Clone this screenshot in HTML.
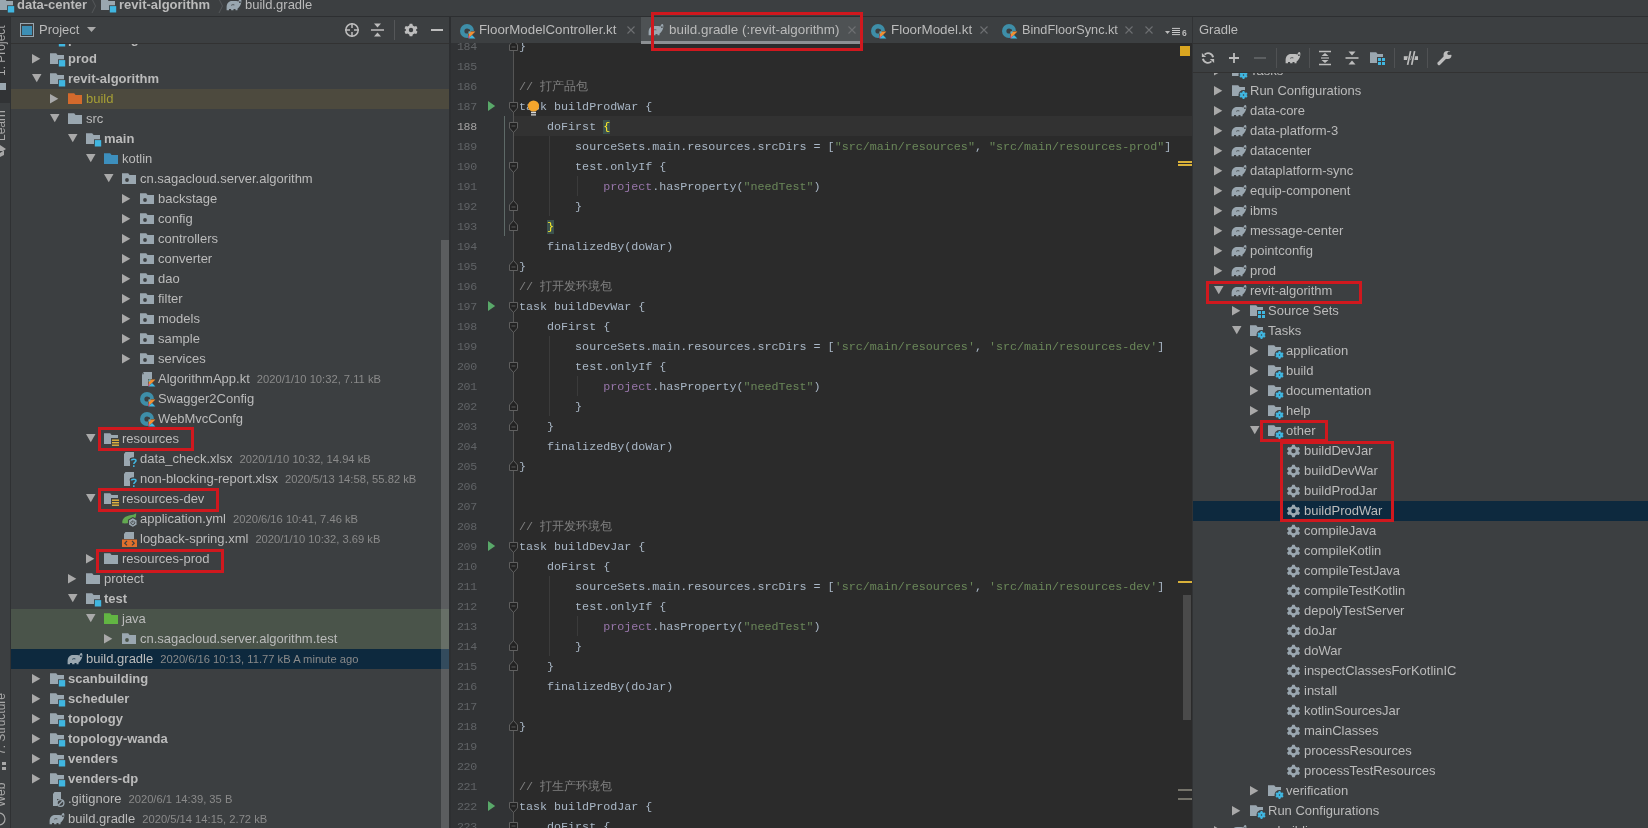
<!DOCTYPE html><html><head><meta charset="utf-8"><style>
*{margin:0;padding:0;box-sizing:border-box}
html,body{width:1648px;height:828px;overflow:hidden;background:#3c3f41;font-family:"Liberation Sans",sans-serif;font-size:13px;color:#bbbbbb}
.a{position:absolute}
.row{position:absolute;height:20px;line-height:20px;white-space:nowrap}
.b{font-weight:bold}
.meta{color:#8a8a8a;font-size:11.2px;margin-left:7px}
.code{position:absolute;left:519px;height:20px;line-height:20px;white-space:pre;font-family:"Liberation Mono",monospace;font-size:11.7px;color:#a9b7c6;padding-top:1px}
.ln{position:absolute;left:451px;width:25.8px;text-align:right;height:20px;line-height:20px;font-family:"Liberation Mono",monospace;font-size:11.6px;letter-spacing:-0.36px;color:#606366;padding-top:1px}
.pr{color:#9876aa}
.st{color:#6a8759}
.cm{color:#808080}
.mb{color:#ffef28;background:#3b514d}
.box{position:absolute;border:3px solid #d0181e}
</style></head><body><div class="a" style="left:0;top:0;width:1648px;height:828px;overflow:hidden;will-change:transform">
<div class="a" style="left:0;top:0;width:1648px;height:17px;background:#3c3f41"></div>
<svg class="a" style="left:-1px;top:-3px;overflow:visible" width="16" height="18" viewBox="0 0 16 18"><path d="M0 2.2 H6.2 L7.6 4 H14 V13 H0 Z" fill="#9aa7b0"/><rect x="8" y="8.3" width="8" height="8" fill="#3c3f41"/><rect x="8.8" y="9.1" width="6.4" height="6.4" fill="#40b6e0"/></svg>
<div class="a b" style="left:17px;top:-5px;line-height:20px">data-center</div>
<svg class="a" style="left:91px;top:0" width="6" height="16"><path d="M1 -1 L4.5 6 L1 13" stroke="#55585a" fill="none"/></svg>
<svg class="a" style="left:101px;top:-3px;overflow:visible" width="16" height="18" viewBox="0 0 16 18"><path d="M0 2.2 H6.2 L7.6 4 H14 V13 H0 Z" fill="#9aa7b0"/><rect x="8" y="8.3" width="8" height="8" fill="#3c3f41"/><rect x="8.8" y="9.1" width="6.4" height="6.4" fill="#40b6e0"/></svg>
<div class="a b" style="left:119px;top:-5px;line-height:20px">revit-algorithm</div>
<svg class="a" style="left:218px;top:0" width="6" height="16"><path d="M1 -1 L4.5 6 L1 13" stroke="#55585a" fill="none"/></svg>
<svg class="a" style="left:227px;top:-3px;overflow:visible" width="16" height="18" viewBox="0 0 16 18"><path d="M-0.4 13.2 L-0.4 10 C-0.2 6.3 1.6 3.9 5 3.9 L9.3 3.9 C10.3 3.9 10.9 4.2 11.5 4.6 C11.7 3.1 12.4 2.1 13.3 2.1 C14.3 2.1 14.6 3.4 14.3 5.2 C13.9 8 12.3 10.3 10.5 11.8 L10.5 13.2 H8.5 V11.9 H6.5 V13.2 H4.1 V11.9 H2 V13.2 Z" fill="#9aa7b0"/><ellipse cx="12.9" cy="5.2" rx="0.85" ry="0.9" fill="#3c3f41"/><path d="M4.2 8.3 Q5.8 7.2 7.4 7.9" stroke="#3c3f41" stroke-width="0.8" fill="none"/></svg>
<div class="a" style="left:245px;top:-5px;line-height:20px">build.gradle</div>
<div class="a" style="left:0;top:16px;width:11px;height:812px;background:#3c3f41;border-right:1px solid #2f3133"></div>
<div class="a" style="left:0;top:16px;width:10px;height:87px;background:#313335"></div>
<div class="a" style="left:0;top:16px;width:10px;height:812px;overflow:hidden">
<div class="a" style="left:0;top:-16px;width:40px;height:900px">
<div class="a" style="left:-6px;top:76px;width:100px;height:14px;line-height:14px;font-size:12px;color:#a8a8a8;transform-origin:0 0;transform:rotate(-90deg);white-space:nowrap">1: Project</div>
<div class="a" style="left:0;top:83px;width:6px;height:7px;background:#9aa7b0"></div>
<div class="a" style="left:-6px;top:141px;width:100px;height:14px;line-height:14px;font-size:12px;color:#a8a8a8;transform-origin:0 0;transform:rotate(-90deg);white-space:nowrap">Learn</div>
<svg class="a" style="left:-6px;top:145px" width="12" height="12"><path d="M0 4 L6 0 L12 4 L6 8 Z M2 6 V10 L6 12 L10 10 V6" fill="#a8a8a8"/></svg>
<div class="a" style="left:-6px;top:755px;width:100px;height:14px;line-height:14px;font-size:12px;color:#a8a8a8;transform-origin:0 0;transform:rotate(-90deg);white-space:nowrap">7: Structure</div>
<div class="a" style="left:2px;top:762px;width:4px;height:3px;background:#a8a8a8"></div><div class="a" style="left:2px;top:767px;width:4px;height:3px;background:#a8a8a8"></div>
<div class="a" style="left:-6px;top:807px;width:100px;height:14px;line-height:14px;font-size:12px;color:#a8a8a8;transform-origin:0 0;transform:rotate(-90deg);white-space:nowrap">Web</div>
<svg class="a" style="left:-8px;top:812px" width="14" height="14"><circle cx="7" cy="7" r="6" fill="none" stroke="#a8a8a8" stroke-width="1.2"/></svg>
</div></div>
<div class="a" style="left:11px;top:16px;width:439px;height:28px;border-bottom:1px solid #323232"></div>
<svg class="a" style="left:20px;top:23px" width="14" height="14"><rect x="0.5" y="0.5" width="13" height="13" fill="none" stroke="#9aa7b0"/><rect x="2" y="3" width="10" height="9" fill="#3d8fb5"/></svg>
<div class="a" style="left:39px;top:20px;line-height:20px">Project</div>
<svg class="a" style="left:87px;top:27px" width="10" height="6"><path d="M0 0 H9 L4.5 5 Z" fill="#a9a9a9"/></svg>
<svg class="a" style="left:344px;top:22px" width="16" height="16"><circle cx="8" cy="8" r="6.2" fill="none" stroke="#bdbdbd" stroke-width="1.5"/><path d="M8 1 V6 M8 10 V15 M1 8 H6 M10 8 H15" stroke="#bdbdbd" stroke-width="1.5"/></svg>
<svg class="a" style="left:371px;top:23px" width="14" height="14"><path d="M0 7 H13" stroke="#bdbdbd" stroke-width="1.5"/><path d="M3 0.5 H10 L6.5 4.5 Z M3 13.5 H10 L6.5 9.5 Z" fill="#bdbdbd"/></svg>
<div class="a" style="left:394px;top:20px;width:1px;height:20px;background:#555759"></div>
<svg class="a" style="left:403px;top:22px" width="16" height="16"><g transform="translate(8 8) scale(1.0)"><path d="M-1.3 -6.3 H1.3 L1.8 -4.4 L3.5 -3.5 L5.3 -4 L6.5 -1.8 L5.1 -0.4 V0.4 L6.5 1.8 L5.3 4 L3.5 3.5 L1.8 4.4 L1.3 6.3 H-1.3 L-1.8 4.4 L-3.5 3.5 L-5.3 4 L-6.5 1.8 L-5.1 0.4 V-0.4 L-6.5 -1.8 L-5.3 -4 L-3.5 -3.5 L-1.8 -4.4 Z" fill="#bdbdbd"/><circle r="2.2" fill="#3c3f41"/></g></svg>
<div class="a" style="left:431px;top:29px;width:12px;height:2px;background:#bdbdbd"></div>
<div class="a" style="left:11px;top:89px;width:438px;height:20px;background:#4d4a3e"></div>
<div class="a" style="left:11px;top:609px;width:438px;height:40px;background:#4a544a"></div>
<div class="a" style="left:11px;top:649px;width:438px;height:20px;background:#0d293e"></div>
<div class="a" style="left:11px;top:44px;width:439px;height:784px;overflow:hidden">
<div class="a" style="left:-11px;top:-44px;width:460px;height:900px">
<svg class="a" style="left:32px;top:34px" width="9" height="10"><path d="M0 0 L8.3 4.75 L0 9.5 Z" fill="#a9a9a9"/></svg>
<svg class="a" style="left:50px;top:31px;overflow:visible" width="16" height="18" viewBox="0 0 16 18"><path d="M0 2.2 H6.2 L7.6 4 H14 V13 H0 Z" fill="#9aa7b0"/><rect x="8" y="8.3" width="8" height="8" fill="#3c3f41"/><rect x="8.8" y="9.1" width="6.4" height="6.4" fill="#40b6e0"/></svg>
<div class="row" style="left:68px;top:29px"><span class="b" style="">pointconfig</span></div>
<svg class="a" style="left:32px;top:54px" width="9" height="10"><path d="M0 0 L8.3 4.75 L0 9.5 Z" fill="#a9a9a9"/></svg>
<svg class="a" style="left:50px;top:51px;overflow:visible" width="16" height="18" viewBox="0 0 16 18"><path d="M0 2.2 H6.2 L7.6 4 H14 V13 H0 Z" fill="#9aa7b0"/><rect x="8" y="8.3" width="8" height="8" fill="#3c3f41"/><rect x="8.8" y="9.1" width="6.4" height="6.4" fill="#40b6e0"/></svg>
<div class="row" style="left:68px;top:49px"><span class="b" style="">prod</span></div>
<svg class="a" style="left:32px;top:74px" width="10" height="9"><path d="M0 0 H9.5 L4.75 8.3 Z" fill="#a9a9a9"/></svg>
<svg class="a" style="left:50px;top:71px;overflow:visible" width="16" height="18" viewBox="0 0 16 18"><path d="M0 2.2 H6.2 L7.6 4 H14 V13 H0 Z" fill="#9aa7b0"/><rect x="8" y="8.3" width="8" height="8" fill="#3c3f41"/><rect x="8.8" y="9.1" width="6.4" height="6.4" fill="#40b6e0"/></svg>
<div class="row" style="left:68px;top:69px"><span class="b" style="">revit-algorithm</span></div>
<svg class="a" style="left:50px;top:94px" width="9" height="10"><path d="M0 0 L8.3 4.75 L0 9.5 Z" fill="#a9a9a9"/></svg>
<svg class="a" style="left:68px;top:91px;overflow:visible" width="16" height="18" viewBox="0 0 16 18"><path d="M0 2.2 H6.2 L7.6 4 H14 V13 H0 Z" fill="#d46a2c"/></svg>
<div class="row" style="left:86px;top:89px"><span class="" style="color:#a69f35;">build</span></div>
<svg class="a" style="left:50px;top:114px" width="10" height="9"><path d="M0 0 H9.5 L4.75 8.3 Z" fill="#a9a9a9"/></svg>
<svg class="a" style="left:68px;top:111px;overflow:visible" width="16" height="18" viewBox="0 0 16 18"><path d="M0 2.2 H6.2 L7.6 4 H14 V13 H0 Z" fill="#9aa7b0"/></svg>
<div class="row" style="left:86px;top:109px"><span class="" style="">src</span></div>
<svg class="a" style="left:68px;top:134px" width="10" height="9"><path d="M0 0 H9.5 L4.75 8.3 Z" fill="#a9a9a9"/></svg>
<svg class="a" style="left:86px;top:131px;overflow:visible" width="16" height="18" viewBox="0 0 16 18"><path d="M0 2.2 H6.2 L7.6 4 H14 V13 H0 Z" fill="#9aa7b0"/><rect x="8" y="8.3" width="8" height="8" fill="#3c3f41"/><rect x="8.8" y="9.1" width="6.4" height="6.4" fill="#40b6e0"/></svg>
<div class="row" style="left:104px;top:129px"><span class="b" style="">main</span></div>
<svg class="a" style="left:86px;top:154px" width="10" height="9"><path d="M0 0 H9.5 L4.75 8.3 Z" fill="#a9a9a9"/></svg>
<svg class="a" style="left:104px;top:151px;overflow:visible" width="16" height="18" viewBox="0 0 16 18"><path d="M0 2.2 H6.2 L7.6 4 H14 V13 H0 Z" fill="#3d8fbd"/></svg>
<div class="row" style="left:122px;top:149px"><span class="" style="">kotlin</span></div>
<svg class="a" style="left:104px;top:174px" width="10" height="9"><path d="M0 0 H9.5 L4.75 8.3 Z" fill="#a9a9a9"/></svg>
<svg class="a" style="left:122px;top:171px;overflow:visible" width="16" height="18" viewBox="0 0 16 18"><path d="M0 2.2 H6.2 L7.6 4 H14 V13 H0 Z" fill="#9aa7b0"/><circle cx="5" cy="9" r="1.9" fill="#3c3f41"/></svg>
<div class="row" style="left:140px;top:169px"><span class="" style="">cn.sagacloud.server.algorithm</span></div>
<svg class="a" style="left:122px;top:194px" width="9" height="10"><path d="M0 0 L8.3 4.75 L0 9.5 Z" fill="#a9a9a9"/></svg>
<svg class="a" style="left:140px;top:191px;overflow:visible" width="16" height="18" viewBox="0 0 16 18"><path d="M0 2.2 H6.2 L7.6 4 H14 V13 H0 Z" fill="#9aa7b0"/><circle cx="5" cy="9" r="1.9" fill="#3c3f41"/></svg>
<div class="row" style="left:158px;top:189px"><span class="" style="">backstage</span></div>
<svg class="a" style="left:122px;top:214px" width="9" height="10"><path d="M0 0 L8.3 4.75 L0 9.5 Z" fill="#a9a9a9"/></svg>
<svg class="a" style="left:140px;top:211px;overflow:visible" width="16" height="18" viewBox="0 0 16 18"><path d="M0 2.2 H6.2 L7.6 4 H14 V13 H0 Z" fill="#9aa7b0"/><circle cx="5" cy="9" r="1.9" fill="#3c3f41"/></svg>
<div class="row" style="left:158px;top:209px"><span class="" style="">config</span></div>
<svg class="a" style="left:122px;top:234px" width="9" height="10"><path d="M0 0 L8.3 4.75 L0 9.5 Z" fill="#a9a9a9"/></svg>
<svg class="a" style="left:140px;top:231px;overflow:visible" width="16" height="18" viewBox="0 0 16 18"><path d="M0 2.2 H6.2 L7.6 4 H14 V13 H0 Z" fill="#9aa7b0"/><circle cx="5" cy="9" r="1.9" fill="#3c3f41"/></svg>
<div class="row" style="left:158px;top:229px"><span class="" style="">controllers</span></div>
<svg class="a" style="left:122px;top:254px" width="9" height="10"><path d="M0 0 L8.3 4.75 L0 9.5 Z" fill="#a9a9a9"/></svg>
<svg class="a" style="left:140px;top:251px;overflow:visible" width="16" height="18" viewBox="0 0 16 18"><path d="M0 2.2 H6.2 L7.6 4 H14 V13 H0 Z" fill="#9aa7b0"/><circle cx="5" cy="9" r="1.9" fill="#3c3f41"/></svg>
<div class="row" style="left:158px;top:249px"><span class="" style="">converter</span></div>
<svg class="a" style="left:122px;top:274px" width="9" height="10"><path d="M0 0 L8.3 4.75 L0 9.5 Z" fill="#a9a9a9"/></svg>
<svg class="a" style="left:140px;top:271px;overflow:visible" width="16" height="18" viewBox="0 0 16 18"><path d="M0 2.2 H6.2 L7.6 4 H14 V13 H0 Z" fill="#9aa7b0"/><circle cx="5" cy="9" r="1.9" fill="#3c3f41"/></svg>
<div class="row" style="left:158px;top:269px"><span class="" style="">dao</span></div>
<svg class="a" style="left:122px;top:294px" width="9" height="10"><path d="M0 0 L8.3 4.75 L0 9.5 Z" fill="#a9a9a9"/></svg>
<svg class="a" style="left:140px;top:291px;overflow:visible" width="16" height="18" viewBox="0 0 16 18"><path d="M0 2.2 H6.2 L7.6 4 H14 V13 H0 Z" fill="#9aa7b0"/><circle cx="5" cy="9" r="1.9" fill="#3c3f41"/></svg>
<div class="row" style="left:158px;top:289px"><span class="" style="">filter</span></div>
<svg class="a" style="left:122px;top:314px" width="9" height="10"><path d="M0 0 L8.3 4.75 L0 9.5 Z" fill="#a9a9a9"/></svg>
<svg class="a" style="left:140px;top:311px;overflow:visible" width="16" height="18" viewBox="0 0 16 18"><path d="M0 2.2 H6.2 L7.6 4 H14 V13 H0 Z" fill="#9aa7b0"/><circle cx="5" cy="9" r="1.9" fill="#3c3f41"/></svg>
<div class="row" style="left:158px;top:309px"><span class="" style="">models</span></div>
<svg class="a" style="left:122px;top:334px" width="9" height="10"><path d="M0 0 L8.3 4.75 L0 9.5 Z" fill="#a9a9a9"/></svg>
<svg class="a" style="left:140px;top:331px;overflow:visible" width="16" height="18" viewBox="0 0 16 18"><path d="M0 2.2 H6.2 L7.6 4 H14 V13 H0 Z" fill="#9aa7b0"/><circle cx="5" cy="9" r="1.9" fill="#3c3f41"/></svg>
<div class="row" style="left:158px;top:329px"><span class="" style="">sample</span></div>
<svg class="a" style="left:122px;top:354px" width="9" height="10"><path d="M0 0 L8.3 4.75 L0 9.5 Z" fill="#a9a9a9"/></svg>
<svg class="a" style="left:140px;top:351px;overflow:visible" width="16" height="18" viewBox="0 0 16 18"><path d="M0 2.2 H6.2 L7.6 4 H14 V13 H0 Z" fill="#9aa7b0"/><circle cx="5" cy="9" r="1.9" fill="#3c3f41"/></svg>
<div class="row" style="left:158px;top:349px"><span class="" style="">services</span></div>
<svg class="a" style="left:140px;top:371px;overflow:visible" width="16" height="18" viewBox="0 0 16 18"><path d="M3.5 1 H12 V8 H8 V15 H2 V3 Z" fill="#9aa7b0"/><path d="M2 3.2 L3.6 1.2 V3.2 Z" fill="#3c3f41"/><g transform="translate(8 8)"><rect x="0" y="0" width="8" height="8" fill="#3c3f41"/><path d="M0.6 0.6 H7.4 L0.6 7.4 Z" fill="#f18e33"/><path d="M0.6 7.4 L4 4 L7.4 7.4 Z" fill="#40b6e0"/><path d="M0.6 0.6 L3.2 0.6 L0.6 3.2 Z" fill="#40b6e0"/><path d="M0.6 7.4 V4.5 L2.2 5.8 Z" fill="#c757bc"/></g></svg>
<div class="row" style="left:158px;top:369px"><span class="" style="">AlgorithmApp.kt</span><span class="meta">2020/1/10 10:32, 7.11 kB</span></div>
<svg class="a" style="left:140px;top:391px;overflow:visible" width="16" height="18" viewBox="0 0 16 18"><circle cx="7" cy="8" r="7" fill="#3e8ea8"/><circle cx="7" cy="8" r="2.6" fill="#3c3f41"/><rect x="7" y="6.5" width="3" height="3" fill="#3c3f41"/><g transform="translate(8 8)"><rect x="0" y="0" width="8" height="8" fill="#3c3f41"/><path d="M0.6 0.6 H7.4 L0.6 7.4 Z" fill="#f18e33"/><path d="M0.6 7.4 L4 4 L7.4 7.4 Z" fill="#40b6e0"/><path d="M0.6 0.6 L3.2 0.6 L0.6 3.2 Z" fill="#40b6e0"/><path d="M0.6 7.4 V4.5 L2.2 5.8 Z" fill="#c757bc"/></g></svg>
<div class="row" style="left:158px;top:389px"><span class="" style="">Swagger2Config</span></div>
<svg class="a" style="left:140px;top:411px;overflow:visible" width="16" height="18" viewBox="0 0 16 18"><circle cx="7" cy="8" r="7" fill="#3e8ea8"/><circle cx="7" cy="8" r="2.6" fill="#3c3f41"/><rect x="7" y="6.5" width="3" height="3" fill="#3c3f41"/><g transform="translate(8 8)"><rect x="0" y="0" width="8" height="8" fill="#3c3f41"/><path d="M0.6 0.6 H7.4 L0.6 7.4 Z" fill="#f18e33"/><path d="M0.6 7.4 L4 4 L7.4 7.4 Z" fill="#40b6e0"/><path d="M0.6 0.6 L3.2 0.6 L0.6 3.2 Z" fill="#40b6e0"/><path d="M0.6 7.4 V4.5 L2.2 5.8 Z" fill="#c757bc"/></g></svg>
<div class="row" style="left:158px;top:409px"><span class="" style="">WebMvcConfg</span></div>
<svg class="a" style="left:86px;top:434px" width="10" height="9"><path d="M0 0 H9.5 L4.75 8.3 Z" fill="#a9a9a9"/></svg>
<svg class="a" style="left:104px;top:431px;overflow:visible" width="16" height="18" viewBox="0 0 16 18"><path d="M0 2.2 H6.2 L7.6 4 H14 V13 H0 Z" fill="#9aa7b0"/><rect x="7" y="7" width="9" height="9" fill="#3c3f41"/><g fill="#e0b440"><rect x="8" y="8.5" width="7" height="1.4"/><rect x="8" y="11" width="7" height="1.4"/><rect x="8" y="13.5" width="7" height="1.4"/></g></svg>
<div class="row" style="left:122px;top:429px"><span class="" style="">resources</span></div>
<svg class="a" style="left:122px;top:451px;overflow:visible" width="16" height="18" viewBox="0 0 16 18"><path d="M3.5 1 H12 V7 H8 V15 H2 V3 Z" fill="#9aa7b0"/><path d="M9 9.5 C9 7.3 14.5 7.3 14.5 9.5 C14.5 11.3 12 11.3 12 13 M12 14.5 V16" stroke="#3c3f41" stroke-width="3" fill="none"/><path d="M9.5 9.5 C9.5 7.8 14 7.8 14 9.5 C14 11.2 11.8 11 11.8 13 M11.8 14.3 V16" stroke="#40b6e0" stroke-width="1.5" fill="none"/></svg>
<div class="row" style="left:140px;top:449px"><span class="" style="">data_check.xlsx</span><span class="meta">2020/1/10 10:32, 14.94 kB</span></div>
<svg class="a" style="left:122px;top:471px;overflow:visible" width="16" height="18" viewBox="0 0 16 18"><path d="M3.5 1 H12 V7 H8 V15 H2 V3 Z" fill="#9aa7b0"/><path d="M9 9.5 C9 7.3 14.5 7.3 14.5 9.5 C14.5 11.3 12 11.3 12 13 M12 14.5 V16" stroke="#3c3f41" stroke-width="3" fill="none"/><path d="M9.5 9.5 C9.5 7.8 14 7.8 14 9.5 C14 11.2 11.8 11 11.8 13 M11.8 14.3 V16" stroke="#40b6e0" stroke-width="1.5" fill="none"/></svg>
<div class="row" style="left:140px;top:469px"><span class="" style="">non-blocking-report.xlsx</span><span class="meta">2020/5/13 14:58, 55.82 kB</span></div>
<svg class="a" style="left:86px;top:494px" width="10" height="9"><path d="M0 0 H9.5 L4.75 8.3 Z" fill="#a9a9a9"/></svg>
<svg class="a" style="left:104px;top:491px;overflow:visible" width="16" height="18" viewBox="0 0 16 18"><path d="M0 2.2 H6.2 L7.6 4 H14 V13 H0 Z" fill="#9aa7b0"/><rect x="7" y="7" width="9" height="9" fill="#3c3f41"/><g fill="#e0b440"><rect x="8" y="8.5" width="7" height="1.4"/><rect x="8" y="11" width="7" height="1.4"/><rect x="8" y="13.5" width="7" height="1.4"/></g></svg>
<div class="row" style="left:122px;top:489px"><span class="" style="">resources-dev</span></div>
<svg class="a" style="left:122px;top:511px;overflow:visible" width="16" height="18" viewBox="0 0 16 18"><path d="M0.3 12.3 C0 7.5 3 5.5 7 4.6 C10 3.9 12.6 3.6 14.2 2.3 C14.4 6 13 8.6 10.5 10.8 C8.5 12.3 4 12.6 0.3 12.3 Z" fill="#62a850"/><path d="M10.8 6.6 L15.1 9.1 V14.1 L10.8 16.6 L6.5 14.1 V9.1 Z" fill="#9aa7b0" stroke="#3c3f41" stroke-width="1.1"/><path d="M9.5 10.3 A1.9 1.9 0 1 0 12.1 10.3" fill="none" stroke="#3c3f41" stroke-width="0.9"/><path d="M10.8 9.3 V11.6" stroke="#3c3f41" stroke-width="0.9"/></svg>
<div class="row" style="left:140px;top:509px"><span class="" style="">application.yml</span><span class="meta">2020/6/16 10:41, 7.46 kB</span></div>
<svg class="a" style="left:122px;top:531px;overflow:visible" width="16" height="18" viewBox="0 0 16 18"><path d="M3.5 1 H12 V8 H2 V3 Z" fill="#9aa7b0"/><rect x="0" y="8.5" width="15" height="7.5" fill="#e0702c"/><path d="M5 10 L2.8 12.2 L5 14.4 M10 10 L12.2 12.2 L10 14.4" stroke="#3c3f41" stroke-width="1.2" fill="none"/></svg>
<div class="row" style="left:140px;top:529px"><span class="" style="">logback-spring.xml</span><span class="meta">2020/1/10 10:32, 3.69 kB</span></div>
<svg class="a" style="left:86px;top:554px" width="9" height="10"><path d="M0 0 L8.3 4.75 L0 9.5 Z" fill="#a9a9a9"/></svg>
<svg class="a" style="left:104px;top:551px;overflow:visible" width="16" height="18" viewBox="0 0 16 18"><path d="M0 2.2 H6.2 L7.6 4 H14 V13 H0 Z" fill="#9aa7b0"/></svg>
<div class="row" style="left:122px;top:549px"><span class="" style="">resources-prod</span></div>
<svg class="a" style="left:68px;top:574px" width="9" height="10"><path d="M0 0 L8.3 4.75 L0 9.5 Z" fill="#a9a9a9"/></svg>
<svg class="a" style="left:86px;top:571px;overflow:visible" width="16" height="18" viewBox="0 0 16 18"><path d="M0 2.2 H6.2 L7.6 4 H14 V13 H0 Z" fill="#9aa7b0"/></svg>
<div class="row" style="left:104px;top:569px"><span class="" style="">protect</span></div>
<svg class="a" style="left:68px;top:594px" width="10" height="9"><path d="M0 0 H9.5 L4.75 8.3 Z" fill="#a9a9a9"/></svg>
<svg class="a" style="left:86px;top:591px;overflow:visible" width="16" height="18" viewBox="0 0 16 18"><path d="M0 2.2 H6.2 L7.6 4 H14 V13 H0 Z" fill="#9aa7b0"/><rect x="8" y="8.3" width="8" height="8" fill="#3c3f41"/><rect x="8.8" y="9.1" width="6.4" height="6.4" fill="#40b6e0"/></svg>
<div class="row" style="left:104px;top:589px"><span class="b" style="">test</span></div>
<svg class="a" style="left:86px;top:614px" width="10" height="9"><path d="M0 0 H9.5 L4.75 8.3 Z" fill="#a9a9a9"/></svg>
<svg class="a" style="left:104px;top:611px;overflow:visible" width="16" height="18" viewBox="0 0 16 18"><path d="M0 2.2 H6.2 L7.6 4 H14 V13 H0 Z" fill="#62b543"/></svg>
<div class="row" style="left:122px;top:609px"><span class="" style="">java</span></div>
<svg class="a" style="left:104px;top:634px" width="9" height="10"><path d="M0 0 L8.3 4.75 L0 9.5 Z" fill="#a9a9a9"/></svg>
<svg class="a" style="left:122px;top:631px;overflow:visible" width="16" height="18" viewBox="0 0 16 18"><path d="M0 2.2 H6.2 L7.6 4 H14 V13 H0 Z" fill="#9aa7b0"/><circle cx="5" cy="9" r="1.9" fill="#4a544a"/></svg>
<div class="row" style="left:140px;top:629px"><span class="" style="">cn.sagacloud.server.algorithm.test</span></div>
<svg class="a" style="left:68px;top:651px;overflow:visible" width="16" height="18" viewBox="0 0 16 18"><path d="M-0.4 13.2 L-0.4 10 C-0.2 6.3 1.6 3.9 5 3.9 L9.3 3.9 C10.3 3.9 10.9 4.2 11.5 4.6 C11.7 3.1 12.4 2.1 13.3 2.1 C14.3 2.1 14.6 3.4 14.3 5.2 C13.9 8 12.3 10.3 10.5 11.8 L10.5 13.2 H8.5 V11.9 H6.5 V13.2 H4.1 V11.9 H2 V13.2 Z" fill="#9aa7b0"/><ellipse cx="12.9" cy="5.2" rx="0.85" ry="0.9" fill="#0d293e"/><path d="M4.2 8.3 Q5.8 7.2 7.4 7.9" stroke="#0d293e" stroke-width="0.8" fill="none"/></svg>
<div class="row" style="left:86px;top:649px"><span class="" style="">build.gradle</span><span class="meta">2020/6/16 10:13, 11.77 kB A minute ago</span></div>
<svg class="a" style="left:32px;top:674px" width="9" height="10"><path d="M0 0 L8.3 4.75 L0 9.5 Z" fill="#a9a9a9"/></svg>
<svg class="a" style="left:50px;top:671px;overflow:visible" width="16" height="18" viewBox="0 0 16 18"><path d="M0 2.2 H6.2 L7.6 4 H14 V13 H0 Z" fill="#9aa7b0"/><rect x="8" y="8.3" width="8" height="8" fill="#3c3f41"/><rect x="8.8" y="9.1" width="6.4" height="6.4" fill="#40b6e0"/></svg>
<div class="row" style="left:68px;top:669px"><span class="b" style="">scanbuilding</span></div>
<svg class="a" style="left:32px;top:694px" width="9" height="10"><path d="M0 0 L8.3 4.75 L0 9.5 Z" fill="#a9a9a9"/></svg>
<svg class="a" style="left:50px;top:691px;overflow:visible" width="16" height="18" viewBox="0 0 16 18"><path d="M0 2.2 H6.2 L7.6 4 H14 V13 H0 Z" fill="#9aa7b0"/><rect x="8" y="8.3" width="8" height="8" fill="#3c3f41"/><rect x="8.8" y="9.1" width="6.4" height="6.4" fill="#40b6e0"/></svg>
<div class="row" style="left:68px;top:689px"><span class="b" style="">scheduler</span></div>
<svg class="a" style="left:32px;top:714px" width="9" height="10"><path d="M0 0 L8.3 4.75 L0 9.5 Z" fill="#a9a9a9"/></svg>
<svg class="a" style="left:50px;top:711px;overflow:visible" width="16" height="18" viewBox="0 0 16 18"><path d="M0 2.2 H6.2 L7.6 4 H14 V13 H0 Z" fill="#9aa7b0"/><rect x="8" y="8.3" width="8" height="8" fill="#3c3f41"/><rect x="8.8" y="9.1" width="6.4" height="6.4" fill="#40b6e0"/></svg>
<div class="row" style="left:68px;top:709px"><span class="b" style="">topology</span></div>
<svg class="a" style="left:32px;top:734px" width="9" height="10"><path d="M0 0 L8.3 4.75 L0 9.5 Z" fill="#a9a9a9"/></svg>
<svg class="a" style="left:50px;top:731px;overflow:visible" width="16" height="18" viewBox="0 0 16 18"><path d="M0 2.2 H6.2 L7.6 4 H14 V13 H0 Z" fill="#9aa7b0"/><rect x="8" y="8.3" width="8" height="8" fill="#3c3f41"/><rect x="8.8" y="9.1" width="6.4" height="6.4" fill="#40b6e0"/></svg>
<div class="row" style="left:68px;top:729px"><span class="b" style="">topology-wanda</span></div>
<svg class="a" style="left:32px;top:754px" width="9" height="10"><path d="M0 0 L8.3 4.75 L0 9.5 Z" fill="#a9a9a9"/></svg>
<svg class="a" style="left:50px;top:751px;overflow:visible" width="16" height="18" viewBox="0 0 16 18"><path d="M0 2.2 H6.2 L7.6 4 H14 V13 H0 Z" fill="#9aa7b0"/><rect x="8" y="8.3" width="8" height="8" fill="#3c3f41"/><rect x="8.8" y="9.1" width="6.4" height="6.4" fill="#40b6e0"/></svg>
<div class="row" style="left:68px;top:749px"><span class="b" style="">venders</span></div>
<svg class="a" style="left:32px;top:774px" width="9" height="10"><path d="M0 0 L8.3 4.75 L0 9.5 Z" fill="#a9a9a9"/></svg>
<svg class="a" style="left:50px;top:771px;overflow:visible" width="16" height="18" viewBox="0 0 16 18"><path d="M0 2.2 H6.2 L7.6 4 H14 V13 H0 Z" fill="#9aa7b0"/><rect x="8" y="8.3" width="8" height="8" fill="#3c3f41"/><rect x="8.8" y="9.1" width="6.4" height="6.4" fill="#40b6e0"/></svg>
<div class="row" style="left:68px;top:769px"><span class="b" style="">venders-dp</span></div>
<svg class="a" style="left:50px;top:791px;overflow:visible" width="16" height="18" viewBox="0 0 16 18"><path d="M4.5 1 H11 V8 H7 V15 H3 V3 Z" fill="#9aa7b0"/><circle cx="10.5" cy="12" r="3.4" fill="none" stroke="#9aa7b0" stroke-width="1.3"/><path d="M8.2 14.3 L12.8 9.7" stroke="#9aa7b0" stroke-width="1.3"/></svg>
<div class="row" style="left:68px;top:789px"><span class="" style="">.gitignore</span><span class="meta">2020/6/1 14:39, 35 B</span></div>
<svg class="a" style="left:50px;top:811px;overflow:visible" width="16" height="18" viewBox="0 0 16 18"><path d="M-0.4 13.2 L-0.4 10 C-0.2 6.3 1.6 3.9 5 3.9 L9.3 3.9 C10.3 3.9 10.9 4.2 11.5 4.6 C11.7 3.1 12.4 2.1 13.3 2.1 C14.3 2.1 14.6 3.4 14.3 5.2 C13.9 8 12.3 10.3 10.5 11.8 L10.5 13.2 H8.5 V11.9 H6.5 V13.2 H4.1 V11.9 H2 V13.2 Z" fill="#9aa7b0"/><ellipse cx="12.9" cy="5.2" rx="0.85" ry="0.9" fill="#3c3f41"/><path d="M4.2 8.3 Q5.8 7.2 7.4 7.9" stroke="#3c3f41" stroke-width="0.8" fill="none"/></svg>
<div class="row" style="left:68px;top:809px"><span class="" style="">build.gradle</span><span class="meta">2020/5/14 14:15, 2.72 kB</span></div>
</div></div>
<div class="a" style="left:441px;top:240px;width:8px;height:588px;background:rgba(255,255,255,0.16)"></div>
<div class="a" style="left:449px;top:16px;width:2px;height:812px;background:#2d2f31"></div>
<div class="box" style="left:98px;top:427px;width:96px;height:24px"></div>
<div class="box" style="left:98px;top:488px;width:121px;height:24px"></div>
<div class="box" style="left:96px;top:549px;width:128px;height:24px"></div>
<div class="a" style="left:451px;top:16px;width:741px;height:27px;background:#3c3f41"></div>
<div class="a" style="left:451px;top:43px;width:741px;height:785px;background:#2b2b2b"></div>
<div class="a" style="left:451px;top:43px;width:63px;height:785px;background:#313335"></div>
<div class="a" style="left:641px;top:17px;width:219px;height:27px;background:#4e5254"></div>
<div class="a" style="left:641px;top:41px;width:219px;height:3px;background:#8d9093"></div>
<svg class="a" style="left:460px;top:23px;overflow:visible" width="16" height="18" viewBox="0 0 16 18"><circle cx="7" cy="8" r="7" fill="#3e8ea8"/><circle cx="7" cy="8" r="2.6" fill="#3c3f41"/><rect x="7" y="6.5" width="3" height="3" fill="#3c3f41"/><g transform="translate(8 8)"><rect x="0" y="0" width="8" height="8" fill="#3c3f41"/><path d="M0.6 0.6 H7.4 L0.6 7.4 Z" fill="#f18e33"/><path d="M0.6 7.4 L4 4 L7.4 7.4 Z" fill="#40b6e0"/><path d="M0.6 0.6 L3.2 0.6 L0.6 3.2 Z" fill="#40b6e0"/><path d="M0.6 7.4 V4.5 L2.2 5.8 Z" fill="#c757bc"/></g></svg>
<div class="a" style="left:479px;top:20px;line-height:20px;font-size:13.3px">FloorModelController.kt</div>
<svg class="a" style="left:627px;top:26px" width="8" height="8"><path d="M0.5 0.5 L7.5 7.5 M7.5 0.5 L0.5 7.5" stroke="#6e7072" stroke-width="1.1"/></svg>
<svg class="a" style="left:649px;top:22px;overflow:visible" width="16" height="18" viewBox="0 0 16 18"><path d="M-0.4 13.2 L-0.4 10 C-0.2 6.3 1.6 3.9 5 3.9 L9.3 3.9 C10.3 3.9 10.9 4.2 11.5 4.6 C11.7 3.1 12.4 2.1 13.3 2.1 C14.3 2.1 14.6 3.4 14.3 5.2 C13.9 8 12.3 10.3 10.5 11.8 L10.5 13.2 H8.5 V11.9 H6.5 V13.2 H4.1 V11.9 H2 V13.2 Z" fill="#9aa7b0"/><ellipse cx="12.9" cy="5.2" rx="0.85" ry="0.9" fill="#4e5254"/><path d="M4.2 8.3 Q5.8 7.2 7.4 7.9" stroke="#4e5254" stroke-width="0.8" fill="none"/></svg>
<div class="a" style="left:669px;top:20px;line-height:20px;font-size:13.4px">build.gradle (:revit-algorithm)</div>
<svg class="a" style="left:848px;top:26px" width="8" height="8"><path d="M0.5 0.5 L7.5 7.5 M7.5 0.5 L0.5 7.5" stroke="#6e7072" stroke-width="1.1"/></svg>
<svg class="a" style="left:871px;top:23px;overflow:visible" width="16" height="18" viewBox="0 0 16 18"><circle cx="7" cy="8" r="7" fill="#3e8ea8"/><circle cx="7" cy="8" r="2.6" fill="#3c3f41"/><rect x="7" y="6.5" width="3" height="3" fill="#3c3f41"/><g transform="translate(8 8)"><rect x="0" y="0" width="8" height="8" fill="#3c3f41"/><path d="M0.6 0.6 H7.4 L0.6 7.4 Z" fill="#f18e33"/><path d="M0.6 7.4 L4 4 L7.4 7.4 Z" fill="#40b6e0"/><path d="M0.6 0.6 L3.2 0.6 L0.6 3.2 Z" fill="#40b6e0"/><path d="M0.6 7.4 V4.5 L2.2 5.8 Z" fill="#c757bc"/></g></svg>
<div class="a" style="left:891px;top:20px;line-height:20px;font-size:13.4px">FloorModel.kt</div>
<svg class="a" style="left:980px;top:26px" width="8" height="8"><path d="M0.5 0.5 L7.5 7.5 M7.5 0.5 L0.5 7.5" stroke="#6e7072" stroke-width="1.1"/></svg>
<svg class="a" style="left:1002px;top:23px;overflow:visible" width="16" height="18" viewBox="0 0 16 18"><circle cx="7" cy="8" r="7" fill="#3e8ea8"/><circle cx="7" cy="8" r="2.6" fill="#3c3f41"/><rect x="7" y="6.5" width="3" height="3" fill="#3c3f41"/><g transform="translate(8 8)"><rect x="0" y="0" width="8" height="8" fill="#3c3f41"/><path d="M0.6 0.6 H7.4 L0.6 7.4 Z" fill="#f18e33"/><path d="M0.6 7.4 L4 4 L7.4 7.4 Z" fill="#40b6e0"/><path d="M0.6 0.6 L3.2 0.6 L0.6 3.2 Z" fill="#40b6e0"/><path d="M0.6 7.4 V4.5 L2.2 5.8 Z" fill="#c757bc"/></g></svg>
<div class="a" style="left:1022px;top:20px;line-height:20px;font-size:12.7px">BindFloorSync.kt</div>
<svg class="a" style="left:1125px;top:26px" width="8" height="8"><path d="M0.5 0.5 L7.5 7.5 M7.5 0.5 L0.5 7.5" stroke="#6e7072" stroke-width="1.1"/></svg>
<svg class="a" style="left:1145px;top:26px" width="8" height="8"><path d="M0.5 0.5 L7.5 7.5 M7.5 0.5 L0.5 7.5" stroke="#6e7072" stroke-width="1.1"/></svg>
<svg class="a" style="left:1165px;top:25px" width="24" height="12"><path d="M0 6 H5 L2.5 9 Z" fill="#bbbbbb"/><path d="M7 3.4 H15 M7 5.5 H15 M7 7.5 H15 M7 9.6 H15" stroke="#c8c8c8" stroke-width="1"/><text x="17" y="10.5" font-family="Liberation Sans" font-size="8.5" font-weight="bold" fill="#bbbbbb">6</text></svg>
<div class="a" style="left:451px;top:43px;width:741px;height:785px;overflow:hidden"><div class="a" style="left:-451px;top:-43px;width:1648px;height:900px">
<div class="a" style="left:514px;top:116px;width:678px;height:20px;background:#323232"></div>
<div class="a" style="left:549px;top:136px;width:1px;height:80px;background:#3b3b3b"></div>
<div class="a" style="left:577px;top:176px;width:1px;height:20px;background:#3b3b3b"></div>
<div class="a" style="left:549px;top:336px;width:1px;height:80px;background:#3b3b3b"></div>
<div class="a" style="left:577px;top:376px;width:1px;height:20px;background:#3b3b3b"></div>
<div class="a" style="left:549px;top:576px;width:1px;height:80px;background:#3b3b3b"></div>
<div class="a" style="left:577px;top:616px;width:1px;height:20px;background:#3b3b3b"></div>
<div class="a" style="left:549px;top:836px;width:1px;height:20px;background:#3b3b3b"></div>
<div class="ln" style="top:36px;">184</div>
<div class="code" style="top:36px">}</div>
<div class="ln" style="top:56px;">185</div>
<div class="code" style="top:56px"></div>
<div class="ln" style="top:76px;">186</div>
<div class="code" style="top:76px"><span class="cm">// 打产品包</span></div>
<div class="ln" style="top:96px;">187</div>
<div class="code" style="top:96px">task buildProdWar {</div>
<div class="ln" style="top:116px;color:#a4a3a3;">188</div>
<div class="code" style="top:116px">    doFirst <span class="mb">{</span></div>
<div class="ln" style="top:136px;">189</div>
<div class="code" style="top:136px">        sourceSets.main.resources.srcDirs = [<span class="st">"src/main/resources"</span>, <span class="st">"src/main/resources-prod"</span>]</div>
<div class="ln" style="top:156px;">190</div>
<div class="code" style="top:156px">        test.onlyIf {</div>
<div class="ln" style="top:176px;">191</div>
<div class="code" style="top:176px">            <span class="pr">project</span>.hasProperty(<span class="st">"needTest"</span>)</div>
<div class="ln" style="top:196px;">192</div>
<div class="code" style="top:196px">        }</div>
<div class="ln" style="top:216px;">193</div>
<div class="code" style="top:216px">    <span class="mb">}</span></div>
<div class="ln" style="top:236px;">194</div>
<div class="code" style="top:236px">    finalizedBy(doWar)</div>
<div class="ln" style="top:256px;">195</div>
<div class="code" style="top:256px">}</div>
<div class="ln" style="top:276px;">196</div>
<div class="code" style="top:276px"><span class="cm">// 打开发环境包</span></div>
<div class="ln" style="top:296px;">197</div>
<div class="code" style="top:296px">task buildDevWar {</div>
<div class="ln" style="top:316px;">198</div>
<div class="code" style="top:316px">    doFirst {</div>
<div class="ln" style="top:336px;">199</div>
<div class="code" style="top:336px">        sourceSets.main.resources.srcDirs = [<span class="st">'src/main/resources'</span>, <span class="st">'src/main/resources-dev'</span>]</div>
<div class="ln" style="top:356px;">200</div>
<div class="code" style="top:356px">        test.onlyIf {</div>
<div class="ln" style="top:376px;">201</div>
<div class="code" style="top:376px">            <span class="pr">project</span>.hasProperty(<span class="st">"needTest"</span>)</div>
<div class="ln" style="top:396px;">202</div>
<div class="code" style="top:396px">        }</div>
<div class="ln" style="top:416px;">203</div>
<div class="code" style="top:416px">    }</div>
<div class="ln" style="top:436px;">204</div>
<div class="code" style="top:436px">    finalizedBy(doWar)</div>
<div class="ln" style="top:456px;">205</div>
<div class="code" style="top:456px">}</div>
<div class="ln" style="top:476px;">206</div>
<div class="code" style="top:476px"></div>
<div class="ln" style="top:496px;">207</div>
<div class="code" style="top:496px"></div>
<div class="ln" style="top:516px;">208</div>
<div class="code" style="top:516px"><span class="cm">// 打开发环境包</span></div>
<div class="ln" style="top:536px;">209</div>
<div class="code" style="top:536px">task buildDevJar {</div>
<div class="ln" style="top:556px;">210</div>
<div class="code" style="top:556px">    doFirst {</div>
<div class="ln" style="top:576px;">211</div>
<div class="code" style="top:576px">        sourceSets.main.resources.srcDirs = [<span class="st">'src/main/resources'</span>, <span class="st">'src/main/resources-dev'</span>]</div>
<div class="ln" style="top:596px;">212</div>
<div class="code" style="top:596px">        test.onlyIf {</div>
<div class="ln" style="top:616px;">213</div>
<div class="code" style="top:616px">            <span class="pr">project</span>.hasProperty(<span class="st">"needTest"</span>)</div>
<div class="ln" style="top:636px;">214</div>
<div class="code" style="top:636px">        }</div>
<div class="ln" style="top:656px;">215</div>
<div class="code" style="top:656px">    }</div>
<div class="ln" style="top:676px;">216</div>
<div class="code" style="top:676px">    finalizedBy(doJar)</div>
<div class="ln" style="top:696px;">217</div>
<div class="code" style="top:696px"></div>
<div class="ln" style="top:716px;">218</div>
<div class="code" style="top:716px">}</div>
<div class="ln" style="top:736px;">219</div>
<div class="code" style="top:736px"></div>
<div class="ln" style="top:756px;">220</div>
<div class="code" style="top:756px"></div>
<div class="ln" style="top:776px;">221</div>
<div class="code" style="top:776px"><span class="cm">// 打生产环境包</span></div>
<div class="ln" style="top:796px;">222</div>
<div class="code" style="top:796px">task buildProdJar {</div>
<div class="ln" style="top:816px;">223</div>
<div class="code" style="top:816px">    doFirst {</div>
<svg class="a" style="left:488px;top:101px" width="8" height="11"><path d="M0 0 L7.2 5 L0 10 Z" fill="#59a869"/></svg>
<svg class="a" style="left:488px;top:301px" width="8" height="11"><path d="M0 0 L7.2 5 L0 10 Z" fill="#59a869"/></svg>
<svg class="a" style="left:488px;top:541px" width="8" height="11"><path d="M0 0 L7.2 5 L0 10 Z" fill="#59a869"/></svg>
<svg class="a" style="left:488px;top:801px" width="8" height="11"><path d="M0 0 L7.2 5 L0 10 Z" fill="#59a869"/></svg>
<div class="a" style="left:513px;top:43px;width:1px;height:785px;background:#555555"></div>
<div class="a" style="left:504px;top:116px;width:1px;height:120px;background:#5e6a68"></div>
<svg class="a" style="left:509px;top:102px" width="10" height="12"><path d="M0.5 0.5 H8.5 V6 L4.5 10.5 L0.5 6 Z" fill="#232323" stroke="#606060"/><path d="M2.5 4 H6.5" stroke="#5a5a5a"/></svg>
<svg class="a" style="left:509px;top:122px" width="10" height="12"><path d="M0.5 0.5 H8.5 V6 L4.5 10.5 L0.5 6 Z" fill="#232323" stroke="#606060"/><path d="M2.5 4 H6.5" stroke="#5a5a5a"/></svg>
<svg class="a" style="left:509px;top:162px" width="10" height="12"><path d="M0.5 0.5 H8.5 V6 L4.5 10.5 L0.5 6 Z" fill="#232323" stroke="#606060"/><path d="M2.5 4 H6.5" stroke="#5a5a5a"/></svg>
<svg class="a" style="left:509px;top:302px" width="10" height="12"><path d="M0.5 0.5 H8.5 V6 L4.5 10.5 L0.5 6 Z" fill="#232323" stroke="#606060"/><path d="M2.5 4 H6.5" stroke="#5a5a5a"/></svg>
<svg class="a" style="left:509px;top:322px" width="10" height="12"><path d="M0.5 0.5 H8.5 V6 L4.5 10.5 L0.5 6 Z" fill="#232323" stroke="#606060"/><path d="M2.5 4 H6.5" stroke="#5a5a5a"/></svg>
<svg class="a" style="left:509px;top:362px" width="10" height="12"><path d="M0.5 0.5 H8.5 V6 L4.5 10.5 L0.5 6 Z" fill="#232323" stroke="#606060"/><path d="M2.5 4 H6.5" stroke="#5a5a5a"/></svg>
<svg class="a" style="left:509px;top:542px" width="10" height="12"><path d="M0.5 0.5 H8.5 V6 L4.5 10.5 L0.5 6 Z" fill="#232323" stroke="#606060"/><path d="M2.5 4 H6.5" stroke="#5a5a5a"/></svg>
<svg class="a" style="left:509px;top:562px" width="10" height="12"><path d="M0.5 0.5 H8.5 V6 L4.5 10.5 L0.5 6 Z" fill="#232323" stroke="#606060"/><path d="M2.5 4 H6.5" stroke="#5a5a5a"/></svg>
<svg class="a" style="left:509px;top:602px" width="10" height="12"><path d="M0.5 0.5 H8.5 V6 L4.5 10.5 L0.5 6 Z" fill="#232323" stroke="#606060"/><path d="M2.5 4 H6.5" stroke="#5a5a5a"/></svg>
<svg class="a" style="left:509px;top:802px" width="10" height="12"><path d="M0.5 0.5 H8.5 V6 L4.5 10.5 L0.5 6 Z" fill="#232323" stroke="#606060"/><path d="M2.5 4 H6.5" stroke="#5a5a5a"/></svg>
<svg class="a" style="left:509px;top:822px" width="10" height="12"><path d="M0.5 0.5 H8.5 V6 L4.5 10.5 L0.5 6 Z" fill="#232323" stroke="#606060"/><path d="M2.5 4 H6.5" stroke="#5a5a5a"/></svg>
<svg class="a" style="left:509px;top:40px" width="10" height="12"><path d="M0.5 10.5 H8.5 V5 L4.5 0.5 L0.5 5 Z" fill="#232323" stroke="#606060"/><path d="M2.5 7 H6.5" stroke="#5a5a5a"/></svg>
<svg class="a" style="left:509px;top:200px" width="10" height="12"><path d="M0.5 10.5 H8.5 V5 L4.5 0.5 L0.5 5 Z" fill="#232323" stroke="#606060"/><path d="M2.5 7 H6.5" stroke="#5a5a5a"/></svg>
<svg class="a" style="left:509px;top:220px" width="10" height="12"><path d="M0.5 10.5 H8.5 V5 L4.5 0.5 L0.5 5 Z" fill="#232323" stroke="#606060"/><path d="M2.5 7 H6.5" stroke="#5a5a5a"/></svg>
<svg class="a" style="left:509px;top:260px" width="10" height="12"><path d="M0.5 10.5 H8.5 V5 L4.5 0.5 L0.5 5 Z" fill="#232323" stroke="#606060"/><path d="M2.5 7 H6.5" stroke="#5a5a5a"/></svg>
<svg class="a" style="left:509px;top:400px" width="10" height="12"><path d="M0.5 10.5 H8.5 V5 L4.5 0.5 L0.5 5 Z" fill="#232323" stroke="#606060"/><path d="M2.5 7 H6.5" stroke="#5a5a5a"/></svg>
<svg class="a" style="left:509px;top:420px" width="10" height="12"><path d="M0.5 10.5 H8.5 V5 L4.5 0.5 L0.5 5 Z" fill="#232323" stroke="#606060"/><path d="M2.5 7 H6.5" stroke="#5a5a5a"/></svg>
<svg class="a" style="left:509px;top:460px" width="10" height="12"><path d="M0.5 10.5 H8.5 V5 L4.5 0.5 L0.5 5 Z" fill="#232323" stroke="#606060"/><path d="M2.5 7 H6.5" stroke="#5a5a5a"/></svg>
<svg class="a" style="left:509px;top:640px" width="10" height="12"><path d="M0.5 10.5 H8.5 V5 L4.5 0.5 L0.5 5 Z" fill="#232323" stroke="#606060"/><path d="M2.5 7 H6.5" stroke="#5a5a5a"/></svg>
<svg class="a" style="left:509px;top:660px" width="10" height="12"><path d="M0.5 10.5 H8.5 V5 L4.5 0.5 L0.5 5 Z" fill="#232323" stroke="#606060"/><path d="M2.5 7 H6.5" stroke="#5a5a5a"/></svg>
<svg class="a" style="left:509px;top:720px" width="10" height="12"><path d="M0.5 10.5 H8.5 V5 L4.5 0.5 L0.5 5 Z" fill="#232323" stroke="#606060"/><path d="M2.5 7 H6.5" stroke="#5a5a5a"/></svg>
<svg class="a" style="left:527px;top:100px" width="14" height="17"><circle cx="6.5" cy="6" r="5.6" fill="#f4a52c"/><path d="M4 12.5 H9 M4 14.8 H9" stroke="#d9d9d9" stroke-width="1.3"/></svg>
</div></div>
<div class="a" style="left:1180px;top:46px;width:10px;height:10px;background:#d9a520"></div>
<div class="a" style="left:1178px;top:161px;width:14px;height:2px;background:#d9b13a"></div>
<div class="a" style="left:1178px;top:164px;width:14px;height:2px;background:#d9b13a"></div>
<div class="a" style="left:1178px;top:581px;width:14px;height:2px;background:#d9b13a"></div>
<div class="a" style="left:1178px;top:789px;width:14px;height:2px;background:#75736a"></div>
<div class="a" style="left:1178px;top:798px;width:14px;height:2px;background:#75736a"></div>
<div class="a" style="left:1183px;top:595px;width:8px;height:125px;background:#4a4a4a"></div>
<div class="a" style="left:1192px;top:16px;width:456px;height:812px;background:#3c3f41;border-left:1px solid #313335"></div>
<div class="a" style="left:1193px;top:43px;width:455px;height:1px;background:#323232"></div>
<div class="a" style="left:1199px;top:20px;line-height:20px">Gradle</div>
<div class="a" style="left:1193px;top:72px;width:455px;height:1px;background:#323232"></div>
<svg class="a" style="left:1200px;top:50px" width="16" height="16"><path d="M4.6 4.6 A5.1 5.1 0 0 1 13.1 7.2" stroke="#bdbdbd" stroke-width="1.9" fill="none"/><path d="M1.9 2.9 V7.1 H6.1 Z" fill="#bdbdbd"/><path d="M2.9 8.8 A5.1 5.1 0 0 0 11.4 11.4" stroke="#bdbdbd" stroke-width="1.9" fill="none"/><path d="M14.1 13.1 V8.9 H9.9 Z" fill="#bdbdbd"/></svg>
<svg class="a" style="left:1227px;top:51px" width="14" height="14"><path d="M7 2 V12 M2 7 H12" stroke="#bdbdbd" stroke-width="1.8"/></svg>
<svg class="a" style="left:1253px;top:51px" width="14" height="14"><path d="M1 7 H13" stroke="#5c5f61" stroke-width="2"/></svg>
<div class="a" style="left:1276px;top:48px;width:1px;height:20px;background:#505254"></div>
<svg class="a" style="left:1286px;top:50px;overflow:visible" width="16" height="18" viewBox="0 0 16 18"><path d="M-0.4 13.2 L-0.4 10 C-0.2 6.3 1.6 3.9 5 3.9 L9.3 3.9 C10.3 3.9 10.9 4.2 11.5 4.6 C11.7 3.1 12.4 2.1 13.3 2.1 C14.3 2.1 14.6 3.4 14.3 5.2 C13.9 8 12.3 10.3 10.5 11.8 L10.5 13.2 H8.5 V11.9 H6.5 V13.2 H4.1 V11.9 H2 V13.2 Z" fill="#bdbdbd"/><ellipse cx="12.9" cy="5.2" rx="0.85" ry="0.9" fill="#3c3f41"/><path d="M4.2 8.3 Q5.8 7.2 7.4 7.9" stroke="#3c3f41" stroke-width="0.8" fill="none"/></svg>
<div class="a" style="left:1309px;top:48px;width:1px;height:20px;background:#505254"></div>
<svg class="a" style="left:1317px;top:50px" width="16" height="16"><path d="M2 1.5 H14 M2 14.5 H14" stroke="#bdbdbd" stroke-width="1.6"/><path d="M4.5 6 L8 3 L11.5 6 Z M4.5 10 L8 13 L11.5 10 Z" fill="#bdbdbd"/><path d="M4 8 H12" stroke="#bdbdbd" stroke-width="1.2"/></svg>
<svg class="a" style="left:1344px;top:50px" width="16" height="16"><path d="M1.5 8 H14.5" stroke="#bdbdbd" stroke-width="1.6"/><path d="M4.5 1.5 H11.5 L8 5.5 Z M4.5 14.5 H11.5 L8 10.5 Z" fill="#bdbdbd"/></svg>
<svg class="a" style="left:1370px;top:50px;overflow:visible" width="16" height="18" viewBox="0 0 16 18"><path d="M0 2.2 H6.2 L7.6 4 H13 V13 H0 Z" fill="#9aa7b0"/><rect x="7" y="7" width="9" height="9" fill="#3c3f41"/><g fill="#40b6e0"><rect x="8" y="8" width="3" height="3"/><rect x="12" y="8" width="3" height="3"/><rect x="8" y="12" width="3" height="3"/><rect x="12" y="12" width="3" height="3"/></g></svg>
<div class="a" style="left:1394px;top:48px;width:1px;height:20px;background:#505254"></div>
<svg class="a" style="left:1402px;top:50px" width="18" height="16"><rect x="1.8" y="6.2" width="14.2" height="3.8" fill="#bdbdbd"/><path d="M8.6 1.1 L5.6 14.9 M12.6 1.1 L9.7 14.9" stroke="#3c3f41" stroke-width="3.2"/><path d="M8.6 1.1 L5.6 14.9 M12.6 1.1 L9.7 14.9" stroke="#bdbdbd" stroke-width="1.7"/></svg>
<div class="a" style="left:1427px;top:48px;width:1px;height:20px;background:#505254"></div>
<svg class="a" style="left:1436px;top:50px" width="17" height="16"><path d="M3 13.5 L9.5 7" stroke="#bdbdbd" stroke-width="3.2" stroke-linecap="round"/><circle cx="11.5" cy="5" r="4" fill="#bdbdbd"/><path d="M11.5 4.5 L15.5 0.5 L17 5 Z" fill="#3c3f41"/><circle cx="13" cy="3.2" r="1.6" fill="#3c3f41"/></svg>
<div class="a" style="left:1193px;top:501px;width:455px;height:20px;background:#0d293e"></div>
<div class="a" style="left:1193px;top:73px;width:455px;height:755px;overflow:hidden">
<div class="a" style="left:-1193px;top:-73px;width:1648px;height:900px">
<svg class="a" style="left:1214px;top:66px" width="9" height="10"><path d="M0 0 L8.3 4.75 L0 9.5 Z" fill="#a9a9a9"/></svg>
<svg class="a" style="left:1232px;top:63px;overflow:visible" width="16" height="18" viewBox="0 0 16 18"><path d="M0 2.2 H6.2 L7.6 4 H13 V13 H0 Z" fill="#9aa7b0"/><circle cx="11.5" cy="12" r="5" fill="#3c3f41"/><g transform="translate(11.5 12) scale(0.62)"><path d="M-1.3 -6.3 H1.3 L1.8 -4.4 L3.5 -3.5 L5.3 -4 L6.5 -1.8 L5.1 -0.4 V0.4 L6.5 1.8 L5.3 4 L3.5 3.5 L1.8 4.4 L1.3 6.3 H-1.3 L-1.8 4.4 L-3.5 3.5 L-5.3 4 L-6.5 1.8 L-5.1 0.4 V-0.4 L-6.5 -1.8 L-5.3 -4 L-3.5 -3.5 L-1.8 -4.4 Z" fill="#40b6e0"/><circle r="1.2" fill="#3c3f41"/></g></svg>
<div class="row" style="left:1250px;top:61px"><span class="" style="">Tasks</span></div>
<svg class="a" style="left:1214px;top:86px" width="9" height="10"><path d="M0 0 L8.3 4.75 L0 9.5 Z" fill="#a9a9a9"/></svg>
<svg class="a" style="left:1232px;top:83px;overflow:visible" width="16" height="18" viewBox="0 0 16 18"><path d="M0 2.2 H6.2 L7.6 4 H13 V13 H0 Z" fill="#9aa7b0"/><circle cx="11.5" cy="12" r="5" fill="#3c3f41"/><g transform="translate(11.5 12) scale(0.62)"><path d="M-1.3 -6.3 H1.3 L1.8 -4.4 L3.5 -3.5 L5.3 -4 L6.5 -1.8 L5.1 -0.4 V0.4 L6.5 1.8 L5.3 4 L3.5 3.5 L1.8 4.4 L1.3 6.3 H-1.3 L-1.8 4.4 L-3.5 3.5 L-5.3 4 L-6.5 1.8 L-5.1 0.4 V-0.4 L-6.5 -1.8 L-5.3 -4 L-3.5 -3.5 L-1.8 -4.4 Z" fill="#40b6e0"/><circle r="1.2" fill="#3c3f41"/></g></svg>
<div class="row" style="left:1250px;top:81px"><span class="" style="">Run Configurations</span></div>
<svg class="a" style="left:1214px;top:106px" width="9" height="10"><path d="M0 0 L8.3 4.75 L0 9.5 Z" fill="#a9a9a9"/></svg>
<svg class="a" style="left:1232px;top:103px;overflow:visible" width="16" height="18" viewBox="0 0 16 18"><path d="M-0.4 13.2 L-0.4 10 C-0.2 6.3 1.6 3.9 5 3.9 L9.3 3.9 C10.3 3.9 10.9 4.2 11.5 4.6 C11.7 3.1 12.4 2.1 13.3 2.1 C14.3 2.1 14.6 3.4 14.3 5.2 C13.9 8 12.3 10.3 10.5 11.8 L10.5 13.2 H8.5 V11.9 H6.5 V13.2 H4.1 V11.9 H2 V13.2 Z" fill="#9aa7b0"/><ellipse cx="12.9" cy="5.2" rx="0.85" ry="0.9" fill="#3c3f41"/><path d="M4.2 8.3 Q5.8 7.2 7.4 7.9" stroke="#3c3f41" stroke-width="0.8" fill="none"/></svg>
<div class="row" style="left:1250px;top:101px"><span class="" style="">data-core</span></div>
<svg class="a" style="left:1214px;top:126px" width="9" height="10"><path d="M0 0 L8.3 4.75 L0 9.5 Z" fill="#a9a9a9"/></svg>
<svg class="a" style="left:1232px;top:123px;overflow:visible" width="16" height="18" viewBox="0 0 16 18"><path d="M-0.4 13.2 L-0.4 10 C-0.2 6.3 1.6 3.9 5 3.9 L9.3 3.9 C10.3 3.9 10.9 4.2 11.5 4.6 C11.7 3.1 12.4 2.1 13.3 2.1 C14.3 2.1 14.6 3.4 14.3 5.2 C13.9 8 12.3 10.3 10.5 11.8 L10.5 13.2 H8.5 V11.9 H6.5 V13.2 H4.1 V11.9 H2 V13.2 Z" fill="#9aa7b0"/><ellipse cx="12.9" cy="5.2" rx="0.85" ry="0.9" fill="#3c3f41"/><path d="M4.2 8.3 Q5.8 7.2 7.4 7.9" stroke="#3c3f41" stroke-width="0.8" fill="none"/></svg>
<div class="row" style="left:1250px;top:121px"><span class="" style="">data-platform-3</span></div>
<svg class="a" style="left:1214px;top:146px" width="9" height="10"><path d="M0 0 L8.3 4.75 L0 9.5 Z" fill="#a9a9a9"/></svg>
<svg class="a" style="left:1232px;top:143px;overflow:visible" width="16" height="18" viewBox="0 0 16 18"><path d="M-0.4 13.2 L-0.4 10 C-0.2 6.3 1.6 3.9 5 3.9 L9.3 3.9 C10.3 3.9 10.9 4.2 11.5 4.6 C11.7 3.1 12.4 2.1 13.3 2.1 C14.3 2.1 14.6 3.4 14.3 5.2 C13.9 8 12.3 10.3 10.5 11.8 L10.5 13.2 H8.5 V11.9 H6.5 V13.2 H4.1 V11.9 H2 V13.2 Z" fill="#9aa7b0"/><ellipse cx="12.9" cy="5.2" rx="0.85" ry="0.9" fill="#3c3f41"/><path d="M4.2 8.3 Q5.8 7.2 7.4 7.9" stroke="#3c3f41" stroke-width="0.8" fill="none"/></svg>
<div class="row" style="left:1250px;top:141px"><span class="" style="">datacenter</span></div>
<svg class="a" style="left:1214px;top:166px" width="9" height="10"><path d="M0 0 L8.3 4.75 L0 9.5 Z" fill="#a9a9a9"/></svg>
<svg class="a" style="left:1232px;top:163px;overflow:visible" width="16" height="18" viewBox="0 0 16 18"><path d="M-0.4 13.2 L-0.4 10 C-0.2 6.3 1.6 3.9 5 3.9 L9.3 3.9 C10.3 3.9 10.9 4.2 11.5 4.6 C11.7 3.1 12.4 2.1 13.3 2.1 C14.3 2.1 14.6 3.4 14.3 5.2 C13.9 8 12.3 10.3 10.5 11.8 L10.5 13.2 H8.5 V11.9 H6.5 V13.2 H4.1 V11.9 H2 V13.2 Z" fill="#9aa7b0"/><ellipse cx="12.9" cy="5.2" rx="0.85" ry="0.9" fill="#3c3f41"/><path d="M4.2 8.3 Q5.8 7.2 7.4 7.9" stroke="#3c3f41" stroke-width="0.8" fill="none"/></svg>
<div class="row" style="left:1250px;top:161px"><span class="" style="">dataplatform-sync</span></div>
<svg class="a" style="left:1214px;top:186px" width="9" height="10"><path d="M0 0 L8.3 4.75 L0 9.5 Z" fill="#a9a9a9"/></svg>
<svg class="a" style="left:1232px;top:183px;overflow:visible" width="16" height="18" viewBox="0 0 16 18"><path d="M-0.4 13.2 L-0.4 10 C-0.2 6.3 1.6 3.9 5 3.9 L9.3 3.9 C10.3 3.9 10.9 4.2 11.5 4.6 C11.7 3.1 12.4 2.1 13.3 2.1 C14.3 2.1 14.6 3.4 14.3 5.2 C13.9 8 12.3 10.3 10.5 11.8 L10.5 13.2 H8.5 V11.9 H6.5 V13.2 H4.1 V11.9 H2 V13.2 Z" fill="#9aa7b0"/><ellipse cx="12.9" cy="5.2" rx="0.85" ry="0.9" fill="#3c3f41"/><path d="M4.2 8.3 Q5.8 7.2 7.4 7.9" stroke="#3c3f41" stroke-width="0.8" fill="none"/></svg>
<div class="row" style="left:1250px;top:181px"><span class="" style="">equip-component</span></div>
<svg class="a" style="left:1214px;top:206px" width="9" height="10"><path d="M0 0 L8.3 4.75 L0 9.5 Z" fill="#a9a9a9"/></svg>
<svg class="a" style="left:1232px;top:203px;overflow:visible" width="16" height="18" viewBox="0 0 16 18"><path d="M-0.4 13.2 L-0.4 10 C-0.2 6.3 1.6 3.9 5 3.9 L9.3 3.9 C10.3 3.9 10.9 4.2 11.5 4.6 C11.7 3.1 12.4 2.1 13.3 2.1 C14.3 2.1 14.6 3.4 14.3 5.2 C13.9 8 12.3 10.3 10.5 11.8 L10.5 13.2 H8.5 V11.9 H6.5 V13.2 H4.1 V11.9 H2 V13.2 Z" fill="#9aa7b0"/><ellipse cx="12.9" cy="5.2" rx="0.85" ry="0.9" fill="#3c3f41"/><path d="M4.2 8.3 Q5.8 7.2 7.4 7.9" stroke="#3c3f41" stroke-width="0.8" fill="none"/></svg>
<div class="row" style="left:1250px;top:201px"><span class="" style="">ibms</span></div>
<svg class="a" style="left:1214px;top:226px" width="9" height="10"><path d="M0 0 L8.3 4.75 L0 9.5 Z" fill="#a9a9a9"/></svg>
<svg class="a" style="left:1232px;top:223px;overflow:visible" width="16" height="18" viewBox="0 0 16 18"><path d="M-0.4 13.2 L-0.4 10 C-0.2 6.3 1.6 3.9 5 3.9 L9.3 3.9 C10.3 3.9 10.9 4.2 11.5 4.6 C11.7 3.1 12.4 2.1 13.3 2.1 C14.3 2.1 14.6 3.4 14.3 5.2 C13.9 8 12.3 10.3 10.5 11.8 L10.5 13.2 H8.5 V11.9 H6.5 V13.2 H4.1 V11.9 H2 V13.2 Z" fill="#9aa7b0"/><ellipse cx="12.9" cy="5.2" rx="0.85" ry="0.9" fill="#3c3f41"/><path d="M4.2 8.3 Q5.8 7.2 7.4 7.9" stroke="#3c3f41" stroke-width="0.8" fill="none"/></svg>
<div class="row" style="left:1250px;top:221px"><span class="" style="">message-center</span></div>
<svg class="a" style="left:1214px;top:246px" width="9" height="10"><path d="M0 0 L8.3 4.75 L0 9.5 Z" fill="#a9a9a9"/></svg>
<svg class="a" style="left:1232px;top:243px;overflow:visible" width="16" height="18" viewBox="0 0 16 18"><path d="M-0.4 13.2 L-0.4 10 C-0.2 6.3 1.6 3.9 5 3.9 L9.3 3.9 C10.3 3.9 10.9 4.2 11.5 4.6 C11.7 3.1 12.4 2.1 13.3 2.1 C14.3 2.1 14.6 3.4 14.3 5.2 C13.9 8 12.3 10.3 10.5 11.8 L10.5 13.2 H8.5 V11.9 H6.5 V13.2 H4.1 V11.9 H2 V13.2 Z" fill="#9aa7b0"/><ellipse cx="12.9" cy="5.2" rx="0.85" ry="0.9" fill="#3c3f41"/><path d="M4.2 8.3 Q5.8 7.2 7.4 7.9" stroke="#3c3f41" stroke-width="0.8" fill="none"/></svg>
<div class="row" style="left:1250px;top:241px"><span class="" style="">pointconfig</span></div>
<svg class="a" style="left:1214px;top:266px" width="9" height="10"><path d="M0 0 L8.3 4.75 L0 9.5 Z" fill="#a9a9a9"/></svg>
<svg class="a" style="left:1232px;top:263px;overflow:visible" width="16" height="18" viewBox="0 0 16 18"><path d="M-0.4 13.2 L-0.4 10 C-0.2 6.3 1.6 3.9 5 3.9 L9.3 3.9 C10.3 3.9 10.9 4.2 11.5 4.6 C11.7 3.1 12.4 2.1 13.3 2.1 C14.3 2.1 14.6 3.4 14.3 5.2 C13.9 8 12.3 10.3 10.5 11.8 L10.5 13.2 H8.5 V11.9 H6.5 V13.2 H4.1 V11.9 H2 V13.2 Z" fill="#9aa7b0"/><ellipse cx="12.9" cy="5.2" rx="0.85" ry="0.9" fill="#3c3f41"/><path d="M4.2 8.3 Q5.8 7.2 7.4 7.9" stroke="#3c3f41" stroke-width="0.8" fill="none"/></svg>
<div class="row" style="left:1250px;top:261px"><span class="" style="">prod</span></div>
<svg class="a" style="left:1214px;top:286px" width="10" height="9"><path d="M0 0 H9.5 L4.75 8.3 Z" fill="#a9a9a9"/></svg>
<svg class="a" style="left:1232px;top:283px;overflow:visible" width="16" height="18" viewBox="0 0 16 18"><path d="M-0.4 13.2 L-0.4 10 C-0.2 6.3 1.6 3.9 5 3.9 L9.3 3.9 C10.3 3.9 10.9 4.2 11.5 4.6 C11.7 3.1 12.4 2.1 13.3 2.1 C14.3 2.1 14.6 3.4 14.3 5.2 C13.9 8 12.3 10.3 10.5 11.8 L10.5 13.2 H8.5 V11.9 H6.5 V13.2 H4.1 V11.9 H2 V13.2 Z" fill="#9aa7b0"/><ellipse cx="12.9" cy="5.2" rx="0.85" ry="0.9" fill="#3c3f41"/><path d="M4.2 8.3 Q5.8 7.2 7.4 7.9" stroke="#3c3f41" stroke-width="0.8" fill="none"/></svg>
<div class="row" style="left:1250px;top:281px"><span class="" style="">revit-algorithm</span></div>
<svg class="a" style="left:1232px;top:306px" width="9" height="10"><path d="M0 0 L8.3 4.75 L0 9.5 Z" fill="#a9a9a9"/></svg>
<svg class="a" style="left:1250px;top:303px;overflow:visible" width="16" height="18" viewBox="0 0 16 18"><path d="M0 2.2 H6.2 L7.6 4 H13 V13 H0 Z" fill="#9aa7b0"/><rect x="7" y="7" width="9" height="9" fill="#3c3f41"/><g fill="#40b6e0"><rect x="8" y="8" width="3" height="3"/><rect x="12" y="8" width="3" height="3"/><rect x="8" y="12" width="3" height="3"/><rect x="12" y="12" width="3" height="3"/></g></svg>
<div class="row" style="left:1268px;top:301px"><span class="" style="">Source Sets</span></div>
<svg class="a" style="left:1232px;top:326px" width="10" height="9"><path d="M0 0 H9.5 L4.75 8.3 Z" fill="#a9a9a9"/></svg>
<svg class="a" style="left:1250px;top:323px;overflow:visible" width="16" height="18" viewBox="0 0 16 18"><path d="M0 2.2 H6.2 L7.6 4 H13 V13 H0 Z" fill="#9aa7b0"/><circle cx="11.5" cy="12" r="5" fill="#3c3f41"/><g transform="translate(11.5 12) scale(0.62)"><path d="M-1.3 -6.3 H1.3 L1.8 -4.4 L3.5 -3.5 L5.3 -4 L6.5 -1.8 L5.1 -0.4 V0.4 L6.5 1.8 L5.3 4 L3.5 3.5 L1.8 4.4 L1.3 6.3 H-1.3 L-1.8 4.4 L-3.5 3.5 L-5.3 4 L-6.5 1.8 L-5.1 0.4 V-0.4 L-6.5 -1.8 L-5.3 -4 L-3.5 -3.5 L-1.8 -4.4 Z" fill="#40b6e0"/><circle r="1.2" fill="#3c3f41"/></g></svg>
<div class="row" style="left:1268px;top:321px"><span class="" style="">Tasks</span></div>
<svg class="a" style="left:1250px;top:346px" width="9" height="10"><path d="M0 0 L8.3 4.75 L0 9.5 Z" fill="#a9a9a9"/></svg>
<svg class="a" style="left:1268px;top:343px;overflow:visible" width="16" height="18" viewBox="0 0 16 18"><path d="M0 2.2 H6.2 L7.6 4 H13 V13 H0 Z" fill="#9aa7b0"/><circle cx="11.5" cy="12" r="5" fill="#3c3f41"/><g transform="translate(11.5 12) scale(0.62)"><path d="M-1.3 -6.3 H1.3 L1.8 -4.4 L3.5 -3.5 L5.3 -4 L6.5 -1.8 L5.1 -0.4 V0.4 L6.5 1.8 L5.3 4 L3.5 3.5 L1.8 4.4 L1.3 6.3 H-1.3 L-1.8 4.4 L-3.5 3.5 L-5.3 4 L-6.5 1.8 L-5.1 0.4 V-0.4 L-6.5 -1.8 L-5.3 -4 L-3.5 -3.5 L-1.8 -4.4 Z" fill="#40b6e0"/><circle r="1.2" fill="#3c3f41"/></g></svg>
<div class="row" style="left:1286px;top:341px"><span class="" style="">application</span></div>
<svg class="a" style="left:1250px;top:366px" width="9" height="10"><path d="M0 0 L8.3 4.75 L0 9.5 Z" fill="#a9a9a9"/></svg>
<svg class="a" style="left:1268px;top:363px;overflow:visible" width="16" height="18" viewBox="0 0 16 18"><path d="M0 2.2 H6.2 L7.6 4 H13 V13 H0 Z" fill="#9aa7b0"/><circle cx="11.5" cy="12" r="5" fill="#3c3f41"/><g transform="translate(11.5 12) scale(0.62)"><path d="M-1.3 -6.3 H1.3 L1.8 -4.4 L3.5 -3.5 L5.3 -4 L6.5 -1.8 L5.1 -0.4 V0.4 L6.5 1.8 L5.3 4 L3.5 3.5 L1.8 4.4 L1.3 6.3 H-1.3 L-1.8 4.4 L-3.5 3.5 L-5.3 4 L-6.5 1.8 L-5.1 0.4 V-0.4 L-6.5 -1.8 L-5.3 -4 L-3.5 -3.5 L-1.8 -4.4 Z" fill="#40b6e0"/><circle r="1.2" fill="#3c3f41"/></g></svg>
<div class="row" style="left:1286px;top:361px"><span class="" style="">build</span></div>
<svg class="a" style="left:1250px;top:386px" width="9" height="10"><path d="M0 0 L8.3 4.75 L0 9.5 Z" fill="#a9a9a9"/></svg>
<svg class="a" style="left:1268px;top:383px;overflow:visible" width="16" height="18" viewBox="0 0 16 18"><path d="M0 2.2 H6.2 L7.6 4 H13 V13 H0 Z" fill="#9aa7b0"/><circle cx="11.5" cy="12" r="5" fill="#3c3f41"/><g transform="translate(11.5 12) scale(0.62)"><path d="M-1.3 -6.3 H1.3 L1.8 -4.4 L3.5 -3.5 L5.3 -4 L6.5 -1.8 L5.1 -0.4 V0.4 L6.5 1.8 L5.3 4 L3.5 3.5 L1.8 4.4 L1.3 6.3 H-1.3 L-1.8 4.4 L-3.5 3.5 L-5.3 4 L-6.5 1.8 L-5.1 0.4 V-0.4 L-6.5 -1.8 L-5.3 -4 L-3.5 -3.5 L-1.8 -4.4 Z" fill="#40b6e0"/><circle r="1.2" fill="#3c3f41"/></g></svg>
<div class="row" style="left:1286px;top:381px"><span class="" style="">documentation</span></div>
<svg class="a" style="left:1250px;top:406px" width="9" height="10"><path d="M0 0 L8.3 4.75 L0 9.5 Z" fill="#a9a9a9"/></svg>
<svg class="a" style="left:1268px;top:403px;overflow:visible" width="16" height="18" viewBox="0 0 16 18"><path d="M0 2.2 H6.2 L7.6 4 H13 V13 H0 Z" fill="#9aa7b0"/><circle cx="11.5" cy="12" r="5" fill="#3c3f41"/><g transform="translate(11.5 12) scale(0.62)"><path d="M-1.3 -6.3 H1.3 L1.8 -4.4 L3.5 -3.5 L5.3 -4 L6.5 -1.8 L5.1 -0.4 V0.4 L6.5 1.8 L5.3 4 L3.5 3.5 L1.8 4.4 L1.3 6.3 H-1.3 L-1.8 4.4 L-3.5 3.5 L-5.3 4 L-6.5 1.8 L-5.1 0.4 V-0.4 L-6.5 -1.8 L-5.3 -4 L-3.5 -3.5 L-1.8 -4.4 Z" fill="#40b6e0"/><circle r="1.2" fill="#3c3f41"/></g></svg>
<div class="row" style="left:1286px;top:401px"><span class="" style="">help</span></div>
<svg class="a" style="left:1250px;top:426px" width="10" height="9"><path d="M0 0 H9.5 L4.75 8.3 Z" fill="#a9a9a9"/></svg>
<svg class="a" style="left:1268px;top:423px;overflow:visible" width="16" height="18" viewBox="0 0 16 18"><path d="M0 2.2 H6.2 L7.6 4 H13 V13 H0 Z" fill="#9aa7b0"/><circle cx="11.5" cy="12" r="5" fill="#3c3f41"/><g transform="translate(11.5 12) scale(0.62)"><path d="M-1.3 -6.3 H1.3 L1.8 -4.4 L3.5 -3.5 L5.3 -4 L6.5 -1.8 L5.1 -0.4 V0.4 L6.5 1.8 L5.3 4 L3.5 3.5 L1.8 4.4 L1.3 6.3 H-1.3 L-1.8 4.4 L-3.5 3.5 L-5.3 4 L-6.5 1.8 L-5.1 0.4 V-0.4 L-6.5 -1.8 L-5.3 -4 L-3.5 -3.5 L-1.8 -4.4 Z" fill="#40b6e0"/><circle r="1.2" fill="#3c3f41"/></g></svg>
<div class="row" style="left:1286px;top:421px"><span class="" style="">other</span></div>
<svg class="a" style="left:1286px;top:443px;overflow:visible" width="16" height="18" viewBox="0 0 16 18"><g transform="translate(7.5 8) scale(1.0)"><path d="M-1.3 -6.3 H1.3 L1.8 -4.4 L3.5 -3.5 L5.3 -4 L6.5 -1.8 L5.1 -0.4 V0.4 L6.5 1.8 L5.3 4 L3.5 3.5 L1.8 4.4 L1.3 6.3 H-1.3 L-1.8 4.4 L-3.5 3.5 L-5.3 4 L-6.5 1.8 L-5.1 0.4 V-0.4 L-6.5 -1.8 L-5.3 -4 L-3.5 -3.5 L-1.8 -4.4 Z" fill="#9aa7b0"/><circle r="2.2" fill="#3c3f41"/></g></svg>
<div class="row" style="left:1304px;top:441px"><span class="" style="">buildDevJar</span></div>
<svg class="a" style="left:1286px;top:463px;overflow:visible" width="16" height="18" viewBox="0 0 16 18"><g transform="translate(7.5 8) scale(1.0)"><path d="M-1.3 -6.3 H1.3 L1.8 -4.4 L3.5 -3.5 L5.3 -4 L6.5 -1.8 L5.1 -0.4 V0.4 L6.5 1.8 L5.3 4 L3.5 3.5 L1.8 4.4 L1.3 6.3 H-1.3 L-1.8 4.4 L-3.5 3.5 L-5.3 4 L-6.5 1.8 L-5.1 0.4 V-0.4 L-6.5 -1.8 L-5.3 -4 L-3.5 -3.5 L-1.8 -4.4 Z" fill="#9aa7b0"/><circle r="2.2" fill="#3c3f41"/></g></svg>
<div class="row" style="left:1304px;top:461px"><span class="" style="">buildDevWar</span></div>
<svg class="a" style="left:1286px;top:483px;overflow:visible" width="16" height="18" viewBox="0 0 16 18"><g transform="translate(7.5 8) scale(1.0)"><path d="M-1.3 -6.3 H1.3 L1.8 -4.4 L3.5 -3.5 L5.3 -4 L6.5 -1.8 L5.1 -0.4 V0.4 L6.5 1.8 L5.3 4 L3.5 3.5 L1.8 4.4 L1.3 6.3 H-1.3 L-1.8 4.4 L-3.5 3.5 L-5.3 4 L-6.5 1.8 L-5.1 0.4 V-0.4 L-6.5 -1.8 L-5.3 -4 L-3.5 -3.5 L-1.8 -4.4 Z" fill="#9aa7b0"/><circle r="2.2" fill="#3c3f41"/></g></svg>
<div class="row" style="left:1304px;top:481px"><span class="" style="">buildProdJar</span></div>
<svg class="a" style="left:1286px;top:503px;overflow:visible" width="16" height="18" viewBox="0 0 16 18"><g transform="translate(7.5 8) scale(1.0)"><path d="M-1.3 -6.3 H1.3 L1.8 -4.4 L3.5 -3.5 L5.3 -4 L6.5 -1.8 L5.1 -0.4 V0.4 L6.5 1.8 L5.3 4 L3.5 3.5 L1.8 4.4 L1.3 6.3 H-1.3 L-1.8 4.4 L-3.5 3.5 L-5.3 4 L-6.5 1.8 L-5.1 0.4 V-0.4 L-6.5 -1.8 L-5.3 -4 L-3.5 -3.5 L-1.8 -4.4 Z" fill="#9aa7b0"/><circle r="2.2" fill="#0d293e"/></g></svg>
<div class="row" style="left:1304px;top:501px"><span class="" style="">buildProdWar</span></div>
<svg class="a" style="left:1286px;top:523px;overflow:visible" width="16" height="18" viewBox="0 0 16 18"><g transform="translate(7.5 8) scale(1.0)"><path d="M-1.3 -6.3 H1.3 L1.8 -4.4 L3.5 -3.5 L5.3 -4 L6.5 -1.8 L5.1 -0.4 V0.4 L6.5 1.8 L5.3 4 L3.5 3.5 L1.8 4.4 L1.3 6.3 H-1.3 L-1.8 4.4 L-3.5 3.5 L-5.3 4 L-6.5 1.8 L-5.1 0.4 V-0.4 L-6.5 -1.8 L-5.3 -4 L-3.5 -3.5 L-1.8 -4.4 Z" fill="#9aa7b0"/><circle r="2.2" fill="#3c3f41"/></g></svg>
<div class="row" style="left:1304px;top:521px"><span class="" style="">compileJava</span></div>
<svg class="a" style="left:1286px;top:543px;overflow:visible" width="16" height="18" viewBox="0 0 16 18"><g transform="translate(7.5 8) scale(1.0)"><path d="M-1.3 -6.3 H1.3 L1.8 -4.4 L3.5 -3.5 L5.3 -4 L6.5 -1.8 L5.1 -0.4 V0.4 L6.5 1.8 L5.3 4 L3.5 3.5 L1.8 4.4 L1.3 6.3 H-1.3 L-1.8 4.4 L-3.5 3.5 L-5.3 4 L-6.5 1.8 L-5.1 0.4 V-0.4 L-6.5 -1.8 L-5.3 -4 L-3.5 -3.5 L-1.8 -4.4 Z" fill="#9aa7b0"/><circle r="2.2" fill="#3c3f41"/></g></svg>
<div class="row" style="left:1304px;top:541px"><span class="" style="">compileKotlin</span></div>
<svg class="a" style="left:1286px;top:563px;overflow:visible" width="16" height="18" viewBox="0 0 16 18"><g transform="translate(7.5 8) scale(1.0)"><path d="M-1.3 -6.3 H1.3 L1.8 -4.4 L3.5 -3.5 L5.3 -4 L6.5 -1.8 L5.1 -0.4 V0.4 L6.5 1.8 L5.3 4 L3.5 3.5 L1.8 4.4 L1.3 6.3 H-1.3 L-1.8 4.4 L-3.5 3.5 L-5.3 4 L-6.5 1.8 L-5.1 0.4 V-0.4 L-6.5 -1.8 L-5.3 -4 L-3.5 -3.5 L-1.8 -4.4 Z" fill="#9aa7b0"/><circle r="2.2" fill="#3c3f41"/></g></svg>
<div class="row" style="left:1304px;top:561px"><span class="" style="">compileTestJava</span></div>
<svg class="a" style="left:1286px;top:583px;overflow:visible" width="16" height="18" viewBox="0 0 16 18"><g transform="translate(7.5 8) scale(1.0)"><path d="M-1.3 -6.3 H1.3 L1.8 -4.4 L3.5 -3.5 L5.3 -4 L6.5 -1.8 L5.1 -0.4 V0.4 L6.5 1.8 L5.3 4 L3.5 3.5 L1.8 4.4 L1.3 6.3 H-1.3 L-1.8 4.4 L-3.5 3.5 L-5.3 4 L-6.5 1.8 L-5.1 0.4 V-0.4 L-6.5 -1.8 L-5.3 -4 L-3.5 -3.5 L-1.8 -4.4 Z" fill="#9aa7b0"/><circle r="2.2" fill="#3c3f41"/></g></svg>
<div class="row" style="left:1304px;top:581px"><span class="" style="">compileTestKotlin</span></div>
<svg class="a" style="left:1286px;top:603px;overflow:visible" width="16" height="18" viewBox="0 0 16 18"><g transform="translate(7.5 8) scale(1.0)"><path d="M-1.3 -6.3 H1.3 L1.8 -4.4 L3.5 -3.5 L5.3 -4 L6.5 -1.8 L5.1 -0.4 V0.4 L6.5 1.8 L5.3 4 L3.5 3.5 L1.8 4.4 L1.3 6.3 H-1.3 L-1.8 4.4 L-3.5 3.5 L-5.3 4 L-6.5 1.8 L-5.1 0.4 V-0.4 L-6.5 -1.8 L-5.3 -4 L-3.5 -3.5 L-1.8 -4.4 Z" fill="#9aa7b0"/><circle r="2.2" fill="#3c3f41"/></g></svg>
<div class="row" style="left:1304px;top:601px"><span class="" style="">depolyTestServer</span></div>
<svg class="a" style="left:1286px;top:623px;overflow:visible" width="16" height="18" viewBox="0 0 16 18"><g transform="translate(7.5 8) scale(1.0)"><path d="M-1.3 -6.3 H1.3 L1.8 -4.4 L3.5 -3.5 L5.3 -4 L6.5 -1.8 L5.1 -0.4 V0.4 L6.5 1.8 L5.3 4 L3.5 3.5 L1.8 4.4 L1.3 6.3 H-1.3 L-1.8 4.4 L-3.5 3.5 L-5.3 4 L-6.5 1.8 L-5.1 0.4 V-0.4 L-6.5 -1.8 L-5.3 -4 L-3.5 -3.5 L-1.8 -4.4 Z" fill="#9aa7b0"/><circle r="2.2" fill="#3c3f41"/></g></svg>
<div class="row" style="left:1304px;top:621px"><span class="" style="">doJar</span></div>
<svg class="a" style="left:1286px;top:643px;overflow:visible" width="16" height="18" viewBox="0 0 16 18"><g transform="translate(7.5 8) scale(1.0)"><path d="M-1.3 -6.3 H1.3 L1.8 -4.4 L3.5 -3.5 L5.3 -4 L6.5 -1.8 L5.1 -0.4 V0.4 L6.5 1.8 L5.3 4 L3.5 3.5 L1.8 4.4 L1.3 6.3 H-1.3 L-1.8 4.4 L-3.5 3.5 L-5.3 4 L-6.5 1.8 L-5.1 0.4 V-0.4 L-6.5 -1.8 L-5.3 -4 L-3.5 -3.5 L-1.8 -4.4 Z" fill="#9aa7b0"/><circle r="2.2" fill="#3c3f41"/></g></svg>
<div class="row" style="left:1304px;top:641px"><span class="" style="">doWar</span></div>
<svg class="a" style="left:1286px;top:663px;overflow:visible" width="16" height="18" viewBox="0 0 16 18"><g transform="translate(7.5 8) scale(1.0)"><path d="M-1.3 -6.3 H1.3 L1.8 -4.4 L3.5 -3.5 L5.3 -4 L6.5 -1.8 L5.1 -0.4 V0.4 L6.5 1.8 L5.3 4 L3.5 3.5 L1.8 4.4 L1.3 6.3 H-1.3 L-1.8 4.4 L-3.5 3.5 L-5.3 4 L-6.5 1.8 L-5.1 0.4 V-0.4 L-6.5 -1.8 L-5.3 -4 L-3.5 -3.5 L-1.8 -4.4 Z" fill="#9aa7b0"/><circle r="2.2" fill="#3c3f41"/></g></svg>
<div class="row" style="left:1304px;top:661px"><span class="" style="">inspectClassesForKotlinIC</span></div>
<svg class="a" style="left:1286px;top:683px;overflow:visible" width="16" height="18" viewBox="0 0 16 18"><g transform="translate(7.5 8) scale(1.0)"><path d="M-1.3 -6.3 H1.3 L1.8 -4.4 L3.5 -3.5 L5.3 -4 L6.5 -1.8 L5.1 -0.4 V0.4 L6.5 1.8 L5.3 4 L3.5 3.5 L1.8 4.4 L1.3 6.3 H-1.3 L-1.8 4.4 L-3.5 3.5 L-5.3 4 L-6.5 1.8 L-5.1 0.4 V-0.4 L-6.5 -1.8 L-5.3 -4 L-3.5 -3.5 L-1.8 -4.4 Z" fill="#9aa7b0"/><circle r="2.2" fill="#3c3f41"/></g></svg>
<div class="row" style="left:1304px;top:681px"><span class="" style="">install</span></div>
<svg class="a" style="left:1286px;top:703px;overflow:visible" width="16" height="18" viewBox="0 0 16 18"><g transform="translate(7.5 8) scale(1.0)"><path d="M-1.3 -6.3 H1.3 L1.8 -4.4 L3.5 -3.5 L5.3 -4 L6.5 -1.8 L5.1 -0.4 V0.4 L6.5 1.8 L5.3 4 L3.5 3.5 L1.8 4.4 L1.3 6.3 H-1.3 L-1.8 4.4 L-3.5 3.5 L-5.3 4 L-6.5 1.8 L-5.1 0.4 V-0.4 L-6.5 -1.8 L-5.3 -4 L-3.5 -3.5 L-1.8 -4.4 Z" fill="#9aa7b0"/><circle r="2.2" fill="#3c3f41"/></g></svg>
<div class="row" style="left:1304px;top:701px"><span class="" style="">kotlinSourcesJar</span></div>
<svg class="a" style="left:1286px;top:723px;overflow:visible" width="16" height="18" viewBox="0 0 16 18"><g transform="translate(7.5 8) scale(1.0)"><path d="M-1.3 -6.3 H1.3 L1.8 -4.4 L3.5 -3.5 L5.3 -4 L6.5 -1.8 L5.1 -0.4 V0.4 L6.5 1.8 L5.3 4 L3.5 3.5 L1.8 4.4 L1.3 6.3 H-1.3 L-1.8 4.4 L-3.5 3.5 L-5.3 4 L-6.5 1.8 L-5.1 0.4 V-0.4 L-6.5 -1.8 L-5.3 -4 L-3.5 -3.5 L-1.8 -4.4 Z" fill="#9aa7b0"/><circle r="2.2" fill="#3c3f41"/></g></svg>
<div class="row" style="left:1304px;top:721px"><span class="" style="">mainClasses</span></div>
<svg class="a" style="left:1286px;top:743px;overflow:visible" width="16" height="18" viewBox="0 0 16 18"><g transform="translate(7.5 8) scale(1.0)"><path d="M-1.3 -6.3 H1.3 L1.8 -4.4 L3.5 -3.5 L5.3 -4 L6.5 -1.8 L5.1 -0.4 V0.4 L6.5 1.8 L5.3 4 L3.5 3.5 L1.8 4.4 L1.3 6.3 H-1.3 L-1.8 4.4 L-3.5 3.5 L-5.3 4 L-6.5 1.8 L-5.1 0.4 V-0.4 L-6.5 -1.8 L-5.3 -4 L-3.5 -3.5 L-1.8 -4.4 Z" fill="#9aa7b0"/><circle r="2.2" fill="#3c3f41"/></g></svg>
<div class="row" style="left:1304px;top:741px"><span class="" style="">processResources</span></div>
<svg class="a" style="left:1286px;top:763px;overflow:visible" width="16" height="18" viewBox="0 0 16 18"><g transform="translate(7.5 8) scale(1.0)"><path d="M-1.3 -6.3 H1.3 L1.8 -4.4 L3.5 -3.5 L5.3 -4 L6.5 -1.8 L5.1 -0.4 V0.4 L6.5 1.8 L5.3 4 L3.5 3.5 L1.8 4.4 L1.3 6.3 H-1.3 L-1.8 4.4 L-3.5 3.5 L-5.3 4 L-6.5 1.8 L-5.1 0.4 V-0.4 L-6.5 -1.8 L-5.3 -4 L-3.5 -3.5 L-1.8 -4.4 Z" fill="#9aa7b0"/><circle r="2.2" fill="#3c3f41"/></g></svg>
<div class="row" style="left:1304px;top:761px"><span class="" style="">processTestResources</span></div>
<svg class="a" style="left:1250px;top:786px" width="9" height="10"><path d="M0 0 L8.3 4.75 L0 9.5 Z" fill="#a9a9a9"/></svg>
<svg class="a" style="left:1268px;top:783px;overflow:visible" width="16" height="18" viewBox="0 0 16 18"><path d="M0 2.2 H6.2 L7.6 4 H13 V13 H0 Z" fill="#9aa7b0"/><circle cx="11.5" cy="12" r="5" fill="#3c3f41"/><g transform="translate(11.5 12) scale(0.62)"><path d="M-1.3 -6.3 H1.3 L1.8 -4.4 L3.5 -3.5 L5.3 -4 L6.5 -1.8 L5.1 -0.4 V0.4 L6.5 1.8 L5.3 4 L3.5 3.5 L1.8 4.4 L1.3 6.3 H-1.3 L-1.8 4.4 L-3.5 3.5 L-5.3 4 L-6.5 1.8 L-5.1 0.4 V-0.4 L-6.5 -1.8 L-5.3 -4 L-3.5 -3.5 L-1.8 -4.4 Z" fill="#40b6e0"/><circle r="1.2" fill="#3c3f41"/></g></svg>
<div class="row" style="left:1286px;top:781px"><span class="" style="">verification</span></div>
<svg class="a" style="left:1232px;top:806px" width="9" height="10"><path d="M0 0 L8.3 4.75 L0 9.5 Z" fill="#a9a9a9"/></svg>
<svg class="a" style="left:1250px;top:803px;overflow:visible" width="16" height="18" viewBox="0 0 16 18"><path d="M0 2.2 H6.2 L7.6 4 H13 V13 H0 Z" fill="#9aa7b0"/><circle cx="11.5" cy="12" r="5" fill="#3c3f41"/><g transform="translate(11.5 12) scale(0.62)"><path d="M-1.3 -6.3 H1.3 L1.8 -4.4 L3.5 -3.5 L5.3 -4 L6.5 -1.8 L5.1 -0.4 V0.4 L6.5 1.8 L5.3 4 L3.5 3.5 L1.8 4.4 L1.3 6.3 H-1.3 L-1.8 4.4 L-3.5 3.5 L-5.3 4 L-6.5 1.8 L-5.1 0.4 V-0.4 L-6.5 -1.8 L-5.3 -4 L-3.5 -3.5 L-1.8 -4.4 Z" fill="#40b6e0"/><circle r="1.2" fill="#3c3f41"/></g></svg>
<div class="row" style="left:1268px;top:801px"><span class="" style="">Run Configurations</span></div>
<svg class="a" style="left:1214px;top:826px" width="9" height="10"><path d="M0 0 L8.3 4.75 L0 9.5 Z" fill="#a9a9a9"/></svg>
<svg class="a" style="left:1232px;top:823px;overflow:visible" width="16" height="18" viewBox="0 0 16 18"><path d="M-0.4 13.2 L-0.4 10 C-0.2 6.3 1.6 3.9 5 3.9 L9.3 3.9 C10.3 3.9 10.9 4.2 11.5 4.6 C11.7 3.1 12.4 2.1 13.3 2.1 C14.3 2.1 14.6 3.4 14.3 5.2 C13.9 8 12.3 10.3 10.5 11.8 L10.5 13.2 H8.5 V11.9 H6.5 V13.2 H4.1 V11.9 H2 V13.2 Z" fill="#9aa7b0"/><ellipse cx="12.9" cy="5.2" rx="0.85" ry="0.9" fill="#3c3f41"/><path d="M4.2 8.3 Q5.8 7.2 7.4 7.9" stroke="#3c3f41" stroke-width="0.8" fill="none"/></svg>
<div class="row" style="left:1250px;top:821px"><span class="" style="">scanbuilding</span></div>
</div></div>
<div class="a" style="left:0;top:16px;width:1648px;height:1px;background:#2d2f31"></div>
<div class="box" style="left:1206px;top:281px;width:156px;height:23px"></div>
<div class="box" style="left:1260px;top:420px;width:68px;height:22px"></div>
<div class="box" style="left:1280px;top:441px;width:114px;height:81px"></div>
<div class="box" style="left:651px;top:12px;width:212px;height:39px"></div>
</div></body></html>
